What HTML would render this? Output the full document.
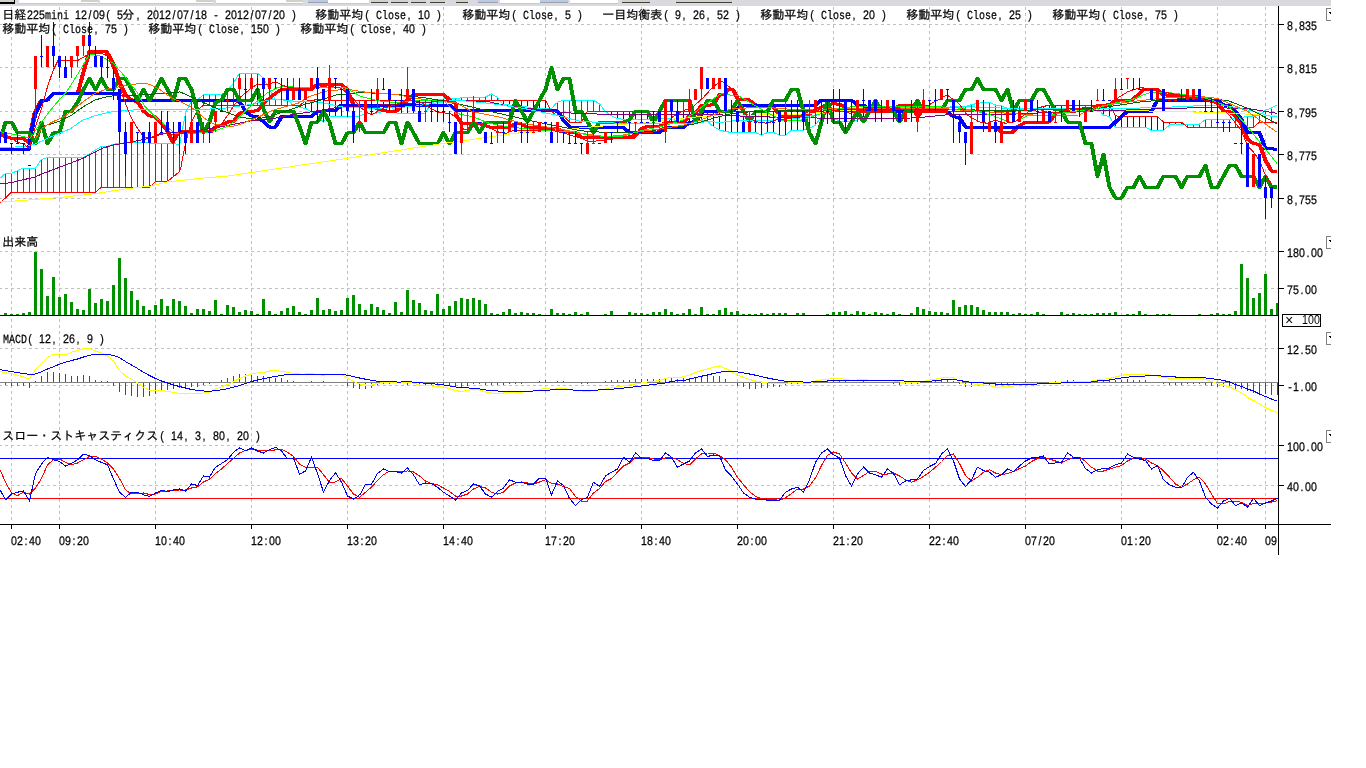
<!DOCTYPE html>
<html lang="ja"><head><meta charset="utf-8"><title>chart</title>
<style>html,body{margin:0;padding:0;background:#fff;overflow:hidden;width:1366px;height:768px}svg{display:block}</style></head>
<body><svg width="1366" height="768" viewBox="0 0 1366 768" shape-rendering="crispEdges">
<rect width="1366" height="768" fill="#fff"/>
<g id="strip">
<rect x="0" y="0" width="1331" height="6" fill="#d9dae0"/>
<rect x="0" y="0" width="14" height="2" fill="#d4d0c8"/>
<rect x="0" y="2" width="15" height="1.5" fill="#000"/>
<rect x="13.5" y="0" width="1.5" height="3" fill="#000"/>
<rect x="19" y="0" width="79" height="3" fill="#fff"/>
<rect x="19" y="2.5" width="79" height="1" fill="#c8c8d0"/>
<rect x="81" y="0" width="17" height="1.5" fill="#d4d0c8"/>
<rect x="81" y="1.5" width="17" height="0.8" fill="#808088"/>
<rect x="100" y="0" width="113" height="3" fill="#fff"/>
<rect x="100" y="2.5" width="113" height="1" fill="#c8c8d0"/>
<rect x="196" y="0" width="17" height="1.5" fill="#d4d0c8"/>
<rect x="196" y="1.5" width="17" height="0.8" fill="#808088"/>
<rect x="216" y="0" width="87" height="3" fill="#fff"/>
<rect x="216" y="2.5" width="87" height="1" fill="#c8c8d0"/>
<rect x="286" y="0" width="17" height="1.5" fill="#d4d0c8"/>
<rect x="286" y="1.5" width="17" height="0.8" fill="#808088"/>
<rect x="328" y="0" width="41" height="3" fill="#fff"/>
<rect x="328" y="2.5" width="41" height="1" fill="#c8c8d0"/>
<rect x="500" y="0" width="40" height="3" fill="#fff"/>
<rect x="500" y="2.5" width="40" height="1" fill="#c8c8d0"/>
<rect x="570" y="0" width="48" height="3" fill="#fff"/>
<rect x="570" y="2.5" width="48" height="1" fill="#c8c8d0"/>
<rect x="308" y="0" width="20" height="2" fill="#b8cce8"/>
<rect x="308" y="2" width="20" height="1" fill="#a0a0a8"/>
<rect x="478" y="0" width="20" height="2" fill="#b8cce8"/>
<rect x="478" y="2" width="20" height="1" fill="#a0a0a8"/>
<rect x="540" y="0" width="28" height="2" fill="#b8cce8"/>
<rect x="540" y="2" width="28" height="1" fill="#a0a0a8"/>
<rect x="371" y="0" width="17" height="1.5" fill="#d4d0c8"/>
<rect x="371" y="1.5" width="17" height="1" fill="#404040"/>
<rect x="391" y="0" width="17" height="1.5" fill="#d4d0c8"/>
<rect x="391" y="1.5" width="17" height="1" fill="#404040"/>
<rect x="411" y="0" width="15" height="1.5" fill="#d4d0c8"/>
<rect x="411" y="1.5" width="15" height="1" fill="#404040"/>
<rect x="430" y="0" width="15" height="1.5" fill="#d4d0c8"/>
<rect x="430" y="1.5" width="15" height="1" fill="#404040"/>
<rect x="456" y="0" width="12" height="1.5" fill="#d4d0c8"/>
<rect x="456" y="1.5" width="12" height="1" fill="#404040"/>
<rect x="622" y="0" width="28" height="1.5" fill="#d4d0c8"/>
<rect x="622" y="1.5" width="28" height="1" fill="#404040"/>
<rect x="676" y="0" width="56" height="1.5" fill="#d4d0c8"/>
<rect x="676" y="1.5" width="56" height="1" fill="#404040"/>
</g>
<g id="grid" stroke="#c0c0c0" stroke-width="1" stroke-dasharray="3,3">
<line x1="11.5" y1="7" x2="11.5" y2="523"/>
<line x1="59.5" y1="7" x2="59.5" y2="523"/>
<line x1="155.5" y1="7" x2="155.5" y2="523"/>
<line x1="251.5" y1="7" x2="251.5" y2="523"/>
<line x1="347.5" y1="7" x2="347.5" y2="523"/>
<line x1="443.5" y1="7" x2="443.5" y2="523"/>
<line x1="545.5" y1="7" x2="545.5" y2="523"/>
<line x1="641.5" y1="7" x2="641.5" y2="523"/>
<line x1="737.5" y1="7" x2="737.5" y2="523"/>
<line x1="833.5" y1="7" x2="833.5" y2="523"/>
<line x1="929.5" y1="7" x2="929.5" y2="523"/>
<line x1="1025.5" y1="7" x2="1025.5" y2="523"/>
<line x1="1121.5" y1="7" x2="1121.5" y2="523"/>
<line x1="1217.5" y1="7" x2="1217.5" y2="523"/>
<line x1="1265.5" y1="7" x2="1265.5" y2="523"/>
<line x1="-1" y1="24.5" x2="1278" y2="24.5"/>
<line x1="-1" y1="67.5" x2="1278" y2="67.5"/>
<line x1="-1" y1="111.5" x2="1278" y2="111.5"/>
<line x1="-1" y1="154.5" x2="1278" y2="154.5"/>
<line x1="-1" y1="198.5" x2="1278" y2="198.5"/>
<line x1="-1" y1="251.5" x2="1278" y2="251.5"/>
<line x1="-1" y1="288.5" x2="1278" y2="288.5"/>
<line x1="-1" y1="348.5" x2="1278" y2="348.5"/>
<line x1="-1" y1="385.5" x2="1278" y2="385.5"/>
<line x1="-1" y1="445.5" x2="1278" y2="445.5"/>
<line x1="-1" y1="485.5" x2="1278" y2="485.5"/>
</g>
<g id="main" clip-path="url(#cpm)">
<defs><clipPath id="cpm"><rect x="0" y="6" width="1277" height="226"/></clipPath><clipPath id="cps"><rect x="0" y="426" width="1278" height="98"/></clipPath><clipPath id="cpa"><rect x="0" y="0" width="1331" height="768"/></clipPath></defs>
<rect x="5" y="173" width="1" height="25" fill="#ff0000"/>
<rect x="11" y="173" width="1" height="19" fill="#ff0000"/>
<rect x="17" y="171" width="1" height="21" fill="#ff0000"/>
<rect x="23" y="168" width="1" height="24" fill="#ff0000"/>
<rect x="29" y="168" width="1" height="24" fill="#ff0000"/>
<rect x="35" y="168" width="1" height="24" fill="#ff0000"/>
<rect x="41" y="160" width="1" height="32" fill="#ff0000"/>
<rect x="47" y="158" width="1" height="34" fill="#ff0000"/>
<rect x="53" y="158" width="1" height="34" fill="#ff0000"/>
<rect x="59" y="158" width="1" height="34" fill="#ff0000"/>
<rect x="65" y="158" width="1" height="34" fill="#ff0000"/>
<rect x="71" y="158" width="1" height="34" fill="#ff0000"/>
<rect x="77" y="158" width="1" height="34" fill="#ff0000"/>
<rect x="83" y="158" width="1" height="34" fill="#ff0000"/>
<rect x="89" y="154" width="1" height="38" fill="#ff0000"/>
<rect x="95" y="150" width="1" height="42" fill="#ff0000"/>
<rect x="101" y="146" width="1" height="41" fill="#ff0000"/>
<rect x="107" y="146" width="1" height="41" fill="#ff0000"/>
<rect x="113" y="144" width="1" height="43" fill="#ff0000"/>
<rect x="119" y="143" width="1" height="44" fill="#ff0000"/>
<rect x="125" y="143" width="1" height="44" fill="#ff0000"/>
<rect x="131" y="143" width="1" height="44" fill="#ff0000"/>
<rect x="137" y="143" width="1" height="44" fill="#ff0000"/>
<rect x="143" y="143" width="1" height="44" fill="#ff0000"/>
<rect x="149" y="143" width="1" height="44" fill="#ff0000"/>
<rect x="155" y="143" width="1" height="39" fill="#ff0000"/>
<rect x="161" y="143" width="1" height="39" fill="#ff0000"/>
<rect x="167" y="143" width="1" height="38" fill="#ff0000"/>
<rect x="173" y="143" width="1" height="33" fill="#ff0000"/>
<rect x="179" y="145" width="1" height="27" fill="#ff0000"/>
<rect x="185" y="113" width="1" height="30" fill="#ff0000"/>
<rect x="191" y="101" width="1" height="21" fill="#ff0000"/>
<rect x="197" y="100" width="1" height="10" fill="#ff0000"/>
<rect x="203" y="94" width="1" height="11" fill="#ff0000"/>
<rect x="209" y="94" width="1" height="11" fill="#ff0000"/>
<rect x="215" y="94" width="1" height="11" fill="#ff0000"/>
<rect x="221" y="94" width="1" height="11" fill="#ff0000"/>
<rect x="227" y="91" width="1" height="14" fill="#ff0000"/>
<rect x="233" y="83" width="1" height="22" fill="#ff0000"/>
<rect x="239" y="73" width="1" height="32" fill="#ff0000"/>
<rect x="245" y="73" width="1" height="32" fill="#ff0000"/>
<rect x="251" y="73" width="1" height="32" fill="#ff0000"/>
<rect x="257" y="73" width="1" height="32" fill="#ff0000"/>
<rect x="263" y="78" width="1" height="27" fill="#ff0000"/>
<rect x="269" y="90" width="1" height="15" fill="#ff0000"/>
<rect x="275" y="100" width="1" height="5" fill="#ff0000"/>
<rect x="281" y="100" width="1" height="5" fill="#ff0000"/>
<rect x="287" y="100" width="1" height="5" fill="#ff0000"/>
<rect x="299" y="105" width="1" height="2" fill="#0000ff"/>
<rect x="305" y="101" width="1" height="7" fill="#0000ff"/>
<rect x="311" y="100" width="1" height="12" fill="#0000ff"/>
<rect x="317" y="100" width="1" height="16" fill="#0000ff"/>
<rect x="323" y="100" width="1" height="22" fill="#0000ff"/>
<rect x="329" y="100" width="1" height="17" fill="#0000ff"/>
<rect x="335" y="100" width="1" height="17" fill="#0000ff"/>
<rect x="341" y="100" width="1" height="17" fill="#0000ff"/>
<rect x="347" y="100" width="1" height="17" fill="#0000ff"/>
<rect x="353" y="100" width="1" height="17" fill="#0000ff"/>
<rect x="359" y="100" width="1" height="16" fill="#0000ff"/>
<rect x="365" y="100" width="1" height="14" fill="#0000ff"/>
<rect x="371" y="100" width="1" height="13" fill="#0000ff"/>
<rect x="377" y="100" width="1" height="13" fill="#0000ff"/>
<rect x="383" y="100" width="1" height="11" fill="#0000ff"/>
<rect x="389" y="100" width="1" height="6" fill="#0000ff"/>
<rect x="395" y="100" width="1" height="11" fill="#0000ff"/>
<rect x="401" y="100" width="1" height="13" fill="#0000ff"/>
<rect x="407" y="100" width="1" height="13" fill="#0000ff"/>
<rect x="413" y="100" width="1" height="13" fill="#0000ff"/>
<rect x="419" y="100" width="1" height="13" fill="#0000ff"/>
<rect x="425" y="100" width="1" height="13" fill="#0000ff"/>
<rect x="431" y="100" width="1" height="4" fill="#0000ff"/>
<rect x="443" y="99" width="1" height="1" fill="#ff0000"/>
<rect x="449" y="99" width="1" height="1" fill="#ff0000"/>
<rect x="455" y="98" width="1" height="2" fill="#ff0000"/>
<rect x="461" y="98" width="1" height="2" fill="#ff0000"/>
<rect x="467" y="97" width="1" height="3" fill="#ff0000"/>
<rect x="473" y="97" width="1" height="3" fill="#ff0000"/>
<rect x="479" y="97" width="1" height="3" fill="#ff0000"/>
<rect x="485" y="97" width="1" height="3" fill="#ff0000"/>
<rect x="491" y="94" width="1" height="6" fill="#ff0000"/>
<rect x="497" y="97" width="1" height="3" fill="#ff0000"/>
<rect x="503" y="100" width="1" height="4" fill="#0000ff"/>
<rect x="509" y="100" width="1" height="5" fill="#0000ff"/>
<rect x="515" y="100" width="1" height="6" fill="#0000ff"/>
<rect x="521" y="100" width="1" height="6" fill="#0000ff"/>
<rect x="527" y="100" width="1" height="7" fill="#0000ff"/>
<rect x="533" y="100" width="1" height="9" fill="#0000ff"/>
<rect x="539" y="100" width="1" height="9" fill="#0000ff"/>
<rect x="545" y="100" width="1" height="9" fill="#0000ff"/>
<rect x="551" y="109" width="1" height="3" fill="#ff0000"/>
<rect x="557" y="103" width="1" height="13" fill="#ff0000"/>
<rect x="563" y="100" width="1" height="16" fill="#ff0000"/>
<rect x="569" y="100" width="1" height="22" fill="#ff0000"/>
<rect x="575" y="100" width="1" height="22" fill="#ff0000"/>
<rect x="581" y="100" width="1" height="22" fill="#ff0000"/>
<rect x="587" y="100" width="1" height="11" fill="#ff0000"/>
<rect x="593" y="100" width="1" height="11" fill="#ff0000"/>
<rect x="599" y="104" width="1" height="7" fill="#ff0000"/>
<rect x="611" y="111" width="1" height="5" fill="#0000ff"/>
<rect x="617" y="111" width="1" height="8" fill="#0000ff"/>
<rect x="623" y="111" width="1" height="8" fill="#0000ff"/>
<rect x="629" y="111" width="1" height="8" fill="#0000ff"/>
<rect x="635" y="111" width="1" height="8" fill="#0000ff"/>
<rect x="641" y="111" width="1" height="8" fill="#0000ff"/>
<rect x="647" y="111" width="1" height="8" fill="#0000ff"/>
<rect x="653" y="111" width="1" height="8" fill="#0000ff"/>
<rect x="659" y="111" width="1" height="8" fill="#0000ff"/>
<rect x="665" y="111" width="1" height="7" fill="#0000ff"/>
<rect x="671" y="111" width="1" height="8" fill="#0000ff"/>
<rect x="677" y="111" width="1" height="10" fill="#0000ff"/>
<rect x="683" y="111" width="1" height="13" fill="#0000ff"/>
<rect x="689" y="111" width="1" height="12" fill="#0000ff"/>
<rect x="695" y="111" width="1" height="10" fill="#0000ff"/>
<rect x="701" y="111" width="1" height="9" fill="#0000ff"/>
<rect x="707" y="111" width="1" height="10" fill="#0000ff"/>
<rect x="713" y="111" width="1" height="16" fill="#0000ff"/>
<rect x="719" y="111" width="1" height="19" fill="#0000ff"/>
<rect x="725" y="111" width="1" height="21" fill="#0000ff"/>
<rect x="731" y="111" width="1" height="21" fill="#0000ff"/>
<rect x="737" y="111" width="1" height="21" fill="#0000ff"/>
<rect x="743" y="111" width="1" height="21" fill="#0000ff"/>
<rect x="749" y="111" width="1" height="21" fill="#0000ff"/>
<rect x="755" y="111" width="1" height="21" fill="#0000ff"/>
<rect x="761" y="111" width="1" height="24" fill="#0000ff"/>
<rect x="767" y="111" width="1" height="21" fill="#0000ff"/>
<rect x="773" y="111" width="1" height="21" fill="#0000ff"/>
<rect x="779" y="111" width="1" height="24" fill="#0000ff"/>
<rect x="785" y="111" width="1" height="24" fill="#0000ff"/>
<rect x="791" y="111" width="1" height="19" fill="#0000ff"/>
<rect x="797" y="111" width="1" height="19" fill="#0000ff"/>
<rect x="803" y="111" width="1" height="19" fill="#0000ff"/>
<rect x="809" y="111" width="1" height="17" fill="#0000ff"/>
<rect x="815" y="111" width="1" height="14" fill="#0000ff"/>
<rect x="821" y="111" width="1" height="6" fill="#0000ff"/>
<rect x="827" y="111" width="1" height="1" fill="#0000ff"/>
<rect x="833" y="111" width="1" height="7" fill="#0000ff"/>
<rect x="839" y="111" width="1" height="10" fill="#0000ff"/>
<rect x="845" y="111" width="1" height="11" fill="#0000ff"/>
<rect x="851" y="111" width="1" height="11" fill="#0000ff"/>
<rect x="857" y="111" width="1" height="9" fill="#0000ff"/>
<rect x="863" y="111" width="1" height="7" fill="#0000ff"/>
<rect x="869" y="111" width="1" height="3" fill="#0000ff"/>
<rect x="875" y="110" width="1" height="1" fill="#ff0000"/>
<rect x="881" y="109" width="1" height="2" fill="#ff0000"/>
<rect x="887" y="108" width="1" height="3" fill="#ff0000"/>
<rect x="893" y="108" width="1" height="3" fill="#ff0000"/>
<rect x="899" y="108" width="1" height="3" fill="#ff0000"/>
<rect x="905" y="108" width="1" height="3" fill="#ff0000"/>
<rect x="911" y="108" width="1" height="3" fill="#ff0000"/>
<rect x="917" y="108" width="1" height="3" fill="#ff0000"/>
<rect x="923" y="108" width="1" height="3" fill="#ff0000"/>
<rect x="929" y="108" width="1" height="3" fill="#ff0000"/>
<rect x="935" y="108" width="1" height="3" fill="#ff0000"/>
<rect x="941" y="108" width="1" height="3" fill="#ff0000"/>
<rect x="947" y="108" width="1" height="3" fill="#ff0000"/>
<rect x="953" y="108" width="1" height="3" fill="#ff0000"/>
<rect x="959" y="108" width="1" height="3" fill="#ff0000"/>
<rect x="965" y="106" width="1" height="5" fill="#ff0000"/>
<rect x="971" y="105" width="1" height="6" fill="#ff0000"/>
<rect x="977" y="103" width="1" height="8" fill="#ff0000"/>
<rect x="983" y="102" width="1" height="9" fill="#ff0000"/>
<rect x="989" y="102" width="1" height="9" fill="#ff0000"/>
<rect x="995" y="105" width="1" height="6" fill="#ff0000"/>
<rect x="1001" y="106" width="1" height="5" fill="#ff0000"/>
<rect x="1007" y="108" width="1" height="3" fill="#ff0000"/>
<rect x="1025" y="109" width="1" height="2" fill="#ff0000"/>
<rect x="1031" y="109" width="1" height="2" fill="#ff0000"/>
<rect x="1043" y="106" width="1" height="2" fill="#0000ff"/>
<rect x="1049" y="105" width="1" height="3" fill="#0000ff"/>
<rect x="1055" y="105" width="1" height="3" fill="#0000ff"/>
<rect x="1061" y="105" width="1" height="3" fill="#0000ff"/>
<rect x="1067" y="105" width="1" height="3" fill="#0000ff"/>
<rect x="1073" y="105" width="1" height="3" fill="#0000ff"/>
<rect x="1079" y="105" width="1" height="3" fill="#0000ff"/>
<rect x="1085" y="105" width="1" height="3" fill="#0000ff"/>
<rect x="1091" y="105" width="1" height="3" fill="#0000ff"/>
<rect x="1097" y="105" width="1" height="3" fill="#0000ff"/>
<rect x="1103" y="105" width="1" height="10" fill="#0000ff"/>
<rect x="1109" y="105" width="1" height="12" fill="#0000ff"/>
<rect x="1115" y="116" width="1" height="11" fill="#0000ff"/>
<rect x="1121" y="117" width="1" height="10" fill="#0000ff"/>
<rect x="1127" y="117" width="1" height="10" fill="#0000ff"/>
<rect x="1133" y="117" width="1" height="10" fill="#0000ff"/>
<rect x="1139" y="117" width="1" height="10" fill="#0000ff"/>
<rect x="1145" y="117" width="1" height="10" fill="#0000ff"/>
<rect x="1151" y="117" width="1" height="13" fill="#0000ff"/>
<rect x="1157" y="117" width="1" height="13" fill="#0000ff"/>
<rect x="1163" y="122" width="1" height="8" fill="#0000ff"/>
<rect x="1169" y="122" width="1" height="3" fill="#0000ff"/>
<rect x="1175" y="122" width="1" height="2" fill="#0000ff"/>
<rect x="1181" y="122" width="1" height="2" fill="#0000ff"/>
<rect x="1187" y="124" width="1" height="3" fill="#ff0000"/>
<rect x="1193" y="124" width="1" height="3" fill="#ff0000"/>
<rect x="1199" y="124" width="1" height="3" fill="#ff0000"/>
<rect x="1205" y="119" width="1" height="8" fill="#ff0000"/>
<rect x="1211" y="119" width="1" height="8" fill="#ff0000"/>
<rect x="1217" y="119" width="1" height="8" fill="#ff0000"/>
<rect x="1223" y="119" width="1" height="8" fill="#ff0000"/>
<rect x="1229" y="119" width="1" height="8" fill="#ff0000"/>
<rect x="1235" y="118" width="1" height="9" fill="#ff0000"/>
<rect x="1241" y="117" width="1" height="10" fill="#ff0000"/>
<rect x="1247" y="117" width="1" height="10" fill="#ff0000"/>
<rect x="1253" y="116" width="1" height="11" fill="#ff0000"/>
<rect x="1259" y="116" width="1" height="6" fill="#ff0000"/>
<rect x="1265" y="110" width="1" height="12" fill="#ff0000"/>
<rect x="1271" y="108" width="1" height="14" fill="#ff0000"/>
<rect x="1277" y="105" width="1" height="17" fill="#ff0000"/>
<polyline points="0.0,178.3 5.5,173.3 11.5,173.3 17.5,170.8 23.5,168.0 35.5,168.0 41.5,159.5 47.5,157.5 83.5,157.5 101.5,146.3 107.5,146.3 113.5,144.2 125.5,142.7 173.5,143.3 179.5,145.3 185.5,113.0 191.5,100.6 197.5,100.0 203.5,94.5 221.5,94.5 227.5,90.9 233.5,83.1 239.5,73.2 257.5,73.2 263.5,78.0 269.5,89.8 275.5,99.6 287.5,100.0 293.5,105.3 299.5,107.3 305.5,108.4 311.5,112.0 317.5,115.5 323.5,122.0 327.0,117.0 329.5,116.6 359.0,116.6 365.5,113.5 377.5,113.0 383.5,111.0 389.5,105.9 395.5,111.0 397.0,113.0 425.5,113.0 430.0,104.8 436.0,100.0 443.5,99.0 456.0,98.4 467.5,97.3 485.5,97.0 491.5,94.0 497.5,97.3 499.2,100.4 503.5,104.5 509.5,105.0 528.0,107.0 533.0,109.0 551.5,108.8 554.8,104.5 558.9,101.5 563.5,100.4 593.5,100.4 599.5,103.7 605.5,111.7 611.5,115.8 617.5,118.7 623.5,119.2 659.5,119.2 665.5,118.0 671.5,119.0 677.5,121.0 683.5,124.0 689.5,123.0 695.5,121.0 701.5,120.5 707.5,121.0 713.5,126.7 719.5,130.0 725.5,131.5 731.5,132.5 755.5,132.5 761.5,135.3 767.5,132.5 773.5,132.5 779.5,135.3 785.5,135.3 791.5,130.0 803.5,130.0 809.5,128.3 815.5,125.0 821.5,116.7 827.5,112.5 833.5,118.0 839.5,121.0 851.5,122.0 863.5,118.0 875.5,110.0 887.5,107.5 912.0,107.5 962.0,107.5 971.5,104.7 977.5,103.3 983.5,102.5 989.5,102.5 995.5,105.0 1001.5,105.8 1007.5,108.3 1013.5,111.2 1025.5,109.0 1049.5,108.3 1097.5,108.3 1103.5,115.0 1109.5,116.7 1115.5,127.3 1145.5,127.3 1151.5,130.5 1163.5,130.5 1169.5,125.0 1175.5,124.0 1199.5,124.0 1205.5,119.4 1229.5,119.4 1235.5,118.0 1247.5,116.6 1259.5,115.5 1265.5,110.2 1271.5,108.0 1277.5,104.8" fill="none" stroke="#00ffff" stroke-width="1" />
<polyline points="0.0,202.5 5.5,198.0 11.5,192.2 95.5,192.2 101.5,187.0 149.5,187.0 155.5,181.7 167.5,181.3 179.5,171.7 181.0,166.7 185.5,143.3 188.0,134.0 191.5,122.0 197.5,110.0 203.5,105.3 299.5,105.3 305.5,101.2 317.5,99.6 330.0,100.4 545.5,100.4 551.5,111.7 557.5,115.9 563.5,116.0 569.5,122.0 581.5,122.0 584.0,118.0 587.5,111.2 1030.0,111.2 1037.5,108.0 1049.5,105.0 1109.5,105.0 1115.5,115.8 1121.5,116.6 1151.5,116.6 1157.5,116.6 1163.5,122.0 1181.5,122.3 1187.5,127.3 1253.5,127.3 1259.5,122.0 1277.5,122.0" fill="none" stroke="#ff0000" stroke-width="1" />
<polyline points="-0.5,135.0 5.5,136.7 11.2,138.3 22.8,138.7 28.5,142.5 30.0,133.0 34.0,113.3 40.2,100.8" fill="none" stroke="#ff0000" stroke-width="3" stroke-linejoin="round"/>
<polyline points="0.5,135.0 6.5,136.7 12.2,138.3 23.8,138.7 29.5,142.5 31.0,133.0 35.0,113.3 41.2,100.8" fill="none" stroke="#ff0000" stroke-width="3" stroke-linejoin="round"/>
<polyline points="77.1,93.8 83.0,72.0 89.0,51.7 106.2,51.7 112.8,63.3 119.0,81.7 125.0,95.0 131.2,100.0 137.0,101.7 142.8,110.8 148.5,115.8 154.5,116.7 161.0,123.3 167.0,131.0 172.3,142.0 177.5,133.3 181.5,131.5 210.5,131.5 215.0,127.0 221.5,125.5 227.2,122.0 233.0,121.7 239.0,113.3 245.0,111.7 257.0,110.8 263.0,103.3 269.0,98.3 275.0,93.3 281.0,89.5 311.0,89.5 317.0,84.2 341.0,84.2 347.0,90.0 350.0,98.3 353.0,105.0 377.5,108.3 383.0,110.8 395.0,111.7 401.0,106.7 407.0,100.0 413.0,94.2 443.0,94.2 449.0,100.0 455.2,103.3 455.5,115.0 461.0,123.3 467.0,124.0 479.0,123.3 485.0,125.8 491.0,127.5 509.0,127.5 515.0,123.3 521.0,124.0 527.0,127.5 555.5,128.3 563.0,131.7 575.0,132.5 581.0,137.5 632.5,137.8 637.5,133.0 641.0,128.5 647.0,126.4 659.0,126.0 665.0,122.5 683.0,122.5 689.0,116.0 695.0,113.0 701.0,105.9 707.0,105.3 713.0,104.8 719.0,94.5 725.0,94.0 727.3,89.6 732.5,89.6 737.5,99.8 748.2,99.8 753.0,103.4 755.5,105.3 770.5,105.3 773.5,107.5 778.2,113.5 780.5,116.0 803.0,116.7 809.0,114.2 815.0,110.8 821.0,107.0 827.0,104.5 833.0,103.8 839.0,104.2 845.0,107.5 851.0,110.8 869.0,111.3 888.5,111.3 893.5,108.3 899.0,105.6 910.5,105.6 917.0,111.3 941.0,111.3 947.0,112.0 953.0,116.7 959.0,117.5 965.0,127.0 994.5,127.3 997.1,128.5 1001.2,132.6 1011.5,132.6 1017.5,126.5 1025.0,122.3 1049.0,122.0 1055.0,113.3 1061.0,111.2 1091.0,110.8 1097.0,105.8 1109.0,104.8 1115.0,100.3 1131.2,100.3 1143.5,89.5 1157.0,89.3 1162.5,94.7 1169.0,95.2 1199.0,96.7 1205.0,99.5 1217.0,102.7 1223.0,111.2 1229.0,111.2 1235.0,116.6 1241.0,124.0 1247.0,139.0 1253.0,143.7 1259.0,144.3 1265.0,160.3 1271.0,171.0 1277.0,171.4" fill="none" stroke="#ff0000" stroke-width="3" stroke-linejoin="round"/>
<polyline points="78.1,93.8 84.0,72.0 90.0,51.7 107.2,51.7 113.8,63.3 120.0,81.7 126.0,95.0 132.2,100.0 138.0,101.7 143.8,110.8 149.5,115.8 155.5,116.7 162.0,123.3 168.0,131.0 173.3,142.0 178.5,133.3 182.5,131.5 211.5,131.5 216.0,127.0 222.5,125.5 228.2,122.0 234.0,121.7 240.0,113.3 246.0,111.7 258.0,110.8 264.0,103.3 270.0,98.3 276.0,93.3 282.0,89.5 312.0,89.5 318.0,84.2 342.0,84.2 348.0,90.0 351.0,98.3 354.0,105.0 378.5,108.3 384.0,110.8 396.0,111.7 402.0,106.7 408.0,100.0 414.0,94.2 444.0,94.2 450.0,100.0 456.2,103.3 456.5,115.0 462.0,123.3 468.0,124.0 480.0,123.3 486.0,125.8 492.0,127.5 510.0,127.5 516.0,123.3 522.0,124.0 528.0,127.5 556.5,128.3 564.0,131.7 576.0,132.5 582.0,137.5 633.5,137.8 638.5,133.0 642.0,128.5 648.0,126.4 660.0,126.0 666.0,122.5 684.0,122.5 690.0,116.0 696.0,113.0 702.0,105.9 708.0,105.3 714.0,104.8 720.0,94.5 726.0,94.0 728.3,89.6 733.5,89.6 738.5,99.8 749.2,99.8 754.0,103.4 756.5,105.3 771.5,105.3 774.5,107.5 779.2,113.5 781.5,116.0 804.0,116.7 810.0,114.2 816.0,110.8 822.0,107.0 828.0,104.5 834.0,103.8 840.0,104.2 846.0,107.5 852.0,110.8 870.0,111.3 889.5,111.3 894.5,108.3 900.0,105.6 911.5,105.6 918.0,111.3 942.0,111.3 948.0,112.0 954.0,116.7 960.0,117.5 966.0,127.0 995.5,127.3 998.1,128.5 1002.2,132.6 1012.5,132.6 1018.5,126.5 1026.0,122.3 1050.0,122.0 1056.0,113.3 1062.0,111.2 1092.0,110.8 1098.0,105.8 1110.0,104.8 1116.0,100.3 1132.2,100.3 1144.5,89.5 1158.0,89.3 1163.5,94.7 1170.0,95.2 1200.0,96.7 1206.0,99.5 1218.0,102.7 1224.0,111.2 1230.0,111.2 1236.0,116.6 1242.0,124.0 1248.0,139.0 1254.0,143.7 1260.0,144.3 1266.0,160.3 1272.0,171.0 1278.0,171.4" fill="none" stroke="#ff0000" stroke-width="3" stroke-linejoin="round"/>
<polyline points="-0.5,149.2 28.5,149.2 30.5,133.0 35.0,113.3 41.2,100.8 47.0,100.0 52.8,93.8 118.7,93.8 119.0,100.3 237.5,100.3 241.5,105.0 245.0,111.7 251.0,115.8 257.0,116.7 263.0,121.7 269.0,127.0 275.0,127.0 281.0,116.7 287.0,116.2 311.0,116.2 317.0,111.7 323.0,110.8 335.0,110.8 341.0,105.0 449.2,105.0 455.2,110.8 555.5,110.8 559.0,113.0 563.0,120.8 569.0,126.7 570.5,127.5 623.0,127.5 629.0,132.6 659.0,132.6 665.0,127.5 683.0,127.5 689.0,122.3 695.0,121.8 701.0,114.0 703.5,111.2 731.0,111.2 737.0,108.0 743.0,105.0 815.0,105.0 821.0,100.0 850.5,100.0 857.0,105.0 863.5,105.0 869.0,111.2 941.0,111.2 947.0,112.0 953.0,116.7 959.0,117.5 965.0,127.0 1109.0,127.3 1115.0,122.0 1121.0,116.6 1127.0,111.2 1151.0,111.2 1157.0,100.3 1217.0,100.3 1223.0,104.8 1229.0,106.0 1235.0,111.2 1241.0,119.8 1247.0,132.8 1259.0,132.8 1265.0,148.6 1277.0,149.2" fill="none" stroke="#0000ff" stroke-width="3" stroke-linejoin="round"/>
<polyline points="0.5,149.2 29.5,149.2 31.5,133.0 36.0,113.3 42.2,100.8 48.0,100.0 53.8,93.8 119.7,93.8 120.0,100.3 238.5,100.3 242.5,105.0 246.0,111.7 252.0,115.8 258.0,116.7 264.0,121.7 270.0,127.0 276.0,127.0 282.0,116.7 288.0,116.2 312.0,116.2 318.0,111.7 324.0,110.8 336.0,110.8 342.0,105.0 450.2,105.0 456.2,110.8 556.5,110.8 560.0,113.0 564.0,120.8 570.0,126.7 571.5,127.5 624.0,127.5 630.0,132.6 660.0,132.6 666.0,127.5 684.0,127.5 690.0,122.3 696.0,121.8 702.0,114.0 704.5,111.2 732.0,111.2 738.0,108.0 744.0,105.0 816.0,105.0 822.0,100.0 851.5,100.0 858.0,105.0 864.5,105.0 870.0,111.2 942.0,111.2 948.0,112.0 954.0,116.7 960.0,117.5 966.0,127.0 1110.0,127.3 1116.0,122.0 1122.0,116.6 1128.0,111.2 1152.0,111.2 1158.0,100.3 1218.0,100.3 1224.0,104.8 1230.0,106.0 1236.0,111.2 1242.0,119.8 1248.0,132.8 1260.0,132.8 1266.0,148.6 1278.0,149.2" fill="none" stroke="#0000ff" stroke-width="3" stroke-linejoin="round"/>
<polyline points="-0.5,132.9 2.0,132.9 5.0,122.0 11.0,122.0 17.0,132.9 23.0,132.9 29.0,132.9 35.0,143.8 41.0,122.0 47.0,143.8 53.0,132.9 59.0,132.9 65.0,111.2 71.0,111.2 77.0,102.5 83.0,89.5 89.0,78.7 95.0,89.5 101.0,78.7 107.0,89.5 113.0,89.5 119.0,78.7 125.0,78.7 131.0,89.5 137.0,100.3 143.0,89.5 149.0,100.3 155.0,89.5 161.0,78.7 167.0,89.5 173.0,100.3 179.0,78.7 185.0,78.7 191.0,89.5 197.0,111.2 203.0,132.9 209.0,122.0 215.0,102.5 221.0,100.3 227.0,89.5 233.0,89.5 239.0,100.3 245.0,100.3 251.0,100.3 257.0,89.5 263.0,109.0 269.0,122.0 275.0,111.2 281.0,111.2 287.0,111.2 293.0,111.2 299.0,126.4 305.0,143.8 311.0,122.0 317.0,122.0 323.0,111.2 329.0,122.0 335.0,143.8 341.0,143.8 347.0,132.9 353.0,132.9 359.0,122.0 365.0,132.9 371.0,132.9 377.0,132.9 383.0,132.9 389.0,122.0 395.0,122.0 401.0,143.8 407.0,122.0 413.0,132.9 419.0,143.8 425.0,143.8 431.0,143.8 437.0,143.8 443.0,132.9 449.0,143.8 455.0,132.9 461.0,132.9 467.0,132.9 473.0,122.0 479.0,132.9 485.0,122.0 491.0,122.0 497.0,122.0 503.0,122.0 509.0,122.0 515.0,100.3 521.0,111.2 527.0,122.0 533.0,111.2 539.0,100.3 545.0,89.5 551.0,67.8 557.0,89.5 563.0,78.7 569.0,78.7 575.0,111.2 581.0,111.2 587.0,122.0 593.0,132.9 599.0,122.0 605.0,122.0 611.0,122.0 617.0,122.0 623.0,122.0 629.0,119.9 635.0,111.2 641.0,111.2 647.0,111.2 653.0,122.0 659.0,111.2 665.0,100.3 671.0,100.3 677.0,100.3 683.0,100.3 689.0,100.3 695.0,122.0 701.0,111.2 707.0,100.3 713.0,100.3 719.0,111.2 725.0,111.2 731.0,111.2 737.0,100.3 743.0,111.2 749.0,122.0 755.0,111.2 761.0,111.2 767.0,111.2 773.0,100.3 779.0,100.3 785.0,100.3 791.0,89.5 797.0,89.5 803.0,111.2 809.0,132.9 815.0,143.8 821.0,122.0 827.0,100.3 833.0,122.0 839.0,122.0 845.0,132.9 851.0,122.0 857.0,111.2 863.0,122.0 869.0,111.2 875.0,100.3 881.0,111.2 887.0,111.2 893.0,111.2 899.0,122.0 905.0,111.2 911.0,111.2 917.0,100.3 923.0,111.2 929.0,111.2 935.0,111.2 941.0,111.2 947.0,100.3 953.0,100.3 959.0,100.3 965.0,89.5 971.0,89.5 977.0,78.7 983.0,89.5 989.0,89.5 995.0,89.5 1001.0,100.3 1007.0,89.5 1013.0,111.2 1019.0,100.3 1025.0,100.3 1031.0,100.3 1037.0,89.5 1043.0,89.5 1049.0,100.3 1055.0,111.2 1061.0,111.2 1067.0,122.0 1073.0,122.0 1079.0,122.0 1085.0,143.8 1091.0,143.8 1097.0,176.3 1103.0,154.6 1109.0,187.2 1115.0,198.0 1121.0,198.0 1127.0,187.2 1133.0,187.2 1139.0,176.3 1145.0,187.2 1151.0,187.2 1157.0,187.2 1163.0,176.3 1169.0,176.3 1175.0,176.3 1181.0,187.2 1187.0,176.3 1193.0,176.3 1199.0,176.3 1205.0,165.4 1211.0,187.2 1217.0,187.2 1223.0,176.3 1229.0,165.4 1235.0,165.4 1241.0,176.3 1247.0,176.3 1253.0,176.3 1259.0,187.2 1265.0,176.3 1271.0,187.2 1277.0,187.2" fill="none" stroke="#009000" stroke-width="3" stroke-linejoin="round"/>
<polyline points="0.5,132.9 3.0,132.9 6.0,122.0 12.0,122.0 18.0,132.9 24.0,132.9 30.0,132.9 36.0,143.8 42.0,122.0 48.0,143.8 54.0,132.9 60.0,132.9 66.0,111.2 72.0,111.2 78.0,102.5 84.0,89.5 90.0,78.7 96.0,89.5 102.0,78.7 108.0,89.5 114.0,89.5 120.0,78.7 126.0,78.7 132.0,89.5 138.0,100.3 144.0,89.5 150.0,100.3 156.0,89.5 162.0,78.7 168.0,89.5 174.0,100.3 180.0,78.7 186.0,78.7 192.0,89.5 198.0,111.2 204.0,132.9 210.0,122.0 216.0,102.5 222.0,100.3 228.0,89.5 234.0,89.5 240.0,100.3 246.0,100.3 252.0,100.3 258.0,89.5 264.0,109.0 270.0,122.0 276.0,111.2 282.0,111.2 288.0,111.2 294.0,111.2 300.0,126.4 306.0,143.8 312.0,122.0 318.0,122.0 324.0,111.2 330.0,122.0 336.0,143.8 342.0,143.8 348.0,132.9 354.0,132.9 360.0,122.0 366.0,132.9 372.0,132.9 378.0,132.9 384.0,132.9 390.0,122.0 396.0,122.0 402.0,143.8 408.0,122.0 414.0,132.9 420.0,143.8 426.0,143.8 432.0,143.8 438.0,143.8 444.0,132.9 450.0,143.8 456.0,132.9 462.0,132.9 468.0,132.9 474.0,122.0 480.0,132.9 486.0,122.0 492.0,122.0 498.0,122.0 504.0,122.0 510.0,122.0 516.0,100.3 522.0,111.2 528.0,122.0 534.0,111.2 540.0,100.3 546.0,89.5 552.0,67.8 558.0,89.5 564.0,78.7 570.0,78.7 576.0,111.2 582.0,111.2 588.0,122.0 594.0,132.9 600.0,122.0 606.0,122.0 612.0,122.0 618.0,122.0 624.0,122.0 630.0,119.9 636.0,111.2 642.0,111.2 648.0,111.2 654.0,122.0 660.0,111.2 666.0,100.3 672.0,100.3 678.0,100.3 684.0,100.3 690.0,100.3 696.0,122.0 702.0,111.2 708.0,100.3 714.0,100.3 720.0,111.2 726.0,111.2 732.0,111.2 738.0,100.3 744.0,111.2 750.0,122.0 756.0,111.2 762.0,111.2 768.0,111.2 774.0,100.3 780.0,100.3 786.0,100.3 792.0,89.5 798.0,89.5 804.0,111.2 810.0,132.9 816.0,143.8 822.0,122.0 828.0,100.3 834.0,122.0 840.0,122.0 846.0,132.9 852.0,122.0 858.0,111.2 864.0,122.0 870.0,111.2 876.0,100.3 882.0,111.2 888.0,111.2 894.0,111.2 900.0,122.0 906.0,111.2 912.0,111.2 918.0,100.3 924.0,111.2 930.0,111.2 936.0,111.2 942.0,111.2 948.0,100.3 954.0,100.3 960.0,100.3 966.0,89.5 972.0,89.5 978.0,78.7 984.0,89.5 990.0,89.5 996.0,89.5 1002.0,100.3 1008.0,89.5 1014.0,111.2 1020.0,100.3 1026.0,100.3 1032.0,100.3 1038.0,89.5 1044.0,89.5 1050.0,100.3 1056.0,111.2 1062.0,111.2 1068.0,122.0 1074.0,122.0 1080.0,122.0 1086.0,143.8 1092.0,143.8 1098.0,176.3 1104.0,154.6 1110.0,187.2 1116.0,198.0 1122.0,198.0 1128.0,187.2 1134.0,187.2 1140.0,176.3 1146.0,187.2 1152.0,187.2 1158.0,187.2 1164.0,176.3 1170.0,176.3 1176.0,176.3 1182.0,187.2 1188.0,176.3 1194.0,176.3 1200.0,176.3 1206.0,165.4 1212.0,187.2 1218.0,187.2 1224.0,176.3 1230.0,165.4 1236.0,165.4 1242.0,176.3 1248.0,176.3 1254.0,176.3 1260.0,187.2 1266.0,176.3 1272.0,187.2 1278.0,187.2" fill="none" stroke="#009000" stroke-width="3" stroke-linejoin="round"/>
<polyline points="815.0,105.0 821.0,100.0 850.5,100.0 857.0,105.0" fill="none" stroke="#0000ff" stroke-width="3" stroke-linejoin="round"/>
<polyline points="816.0,105.0 822.0,100.0 851.5,100.0 858.0,105.0" fill="none" stroke="#0000ff" stroke-width="3" stroke-linejoin="round"/>
<polyline points="106.2,51.7 112.8,63.3 119.0,81.7 125.0,95.0" fill="none" stroke="#ff0000" stroke-width="3" stroke-linejoin="round"/>
<polyline points="107.2,51.7 113.8,63.3 120.0,81.7 126.0,95.0" fill="none" stroke="#ff0000" stroke-width="3" stroke-linejoin="round"/>
<polyline points="869.0,111.3 888.5,111.3 893.5,108.3 899.0,105.6 910.5,105.6 917.0,111.3 941.0,111.3 947.0,112.0" fill="none" stroke="#ff0000" stroke-width="3" stroke-linejoin="round"/>
<polyline points="870.0,111.3 889.5,111.3 894.5,108.3 900.0,105.6 911.5,105.6 918.0,111.3 942.0,111.3 948.0,112.0" fill="none" stroke="#ff0000" stroke-width="3" stroke-linejoin="round"/>
<polyline points="0.0,202.0 11.5,201.3 59.5,197.5 95.0,193.7 130.0,188.3 150.0,186.2 167.0,182.0 200.0,178.3 228.0,176.0 347.5,158.3 443.5,143.3 456.0,142.0 480.0,138.3 515.0,133.3 545.0,130.8 575.0,128.3 610.0,125.4 648.0,122.3 662.0,120.3 682.0,118.2 713.0,115.5 730.0,115.0 760.0,115.0 800.0,114.5 834.0,111.0 860.0,109.8 950.0,109.8 1000.0,112.3 1100.0,110.4 1164.0,111.2 1228.0,113.0 1277.5,116.0" fill="none" stroke="#ffff00" stroke-width="1" />
<polyline points="0.0,184.0 11.7,182.5 35.0,177.0 41.7,174.0 83.0,158.3 101.7,148.5 113.0,145.0 125.0,143.0 137.0,140.8 150.0,138.3 161.7,134.2 173.0,132.5 185.0,131.3 195.0,131.0 226.0,125.8 252.0,120.7 272.6,118.6 293.0,114.5 313.7,111.4 340.0,107.0 400.0,104.0 456.0,100.5 489.0,101.7 506.0,105.8 528.0,108.3 563.0,112.5 581.0,113.7 623.0,114.5 700.0,114.5 709.0,114.2 740.0,116.0 784.0,117.5 850.0,118.5 912.0,118.0 923.0,117.2 949.0,114.6 995.0,115.0 1080.0,111.0 1100.0,110.6 1121.0,110.2 1164.0,108.7 1207.0,107.4 1249.0,108.7 1277.5,113.4" fill="none" stroke="#800080" stroke-width="1" />
<polyline points="0.0,148.0 8.0,147.5 28.0,146.0 35.0,144.0 45.0,139.5 55.0,135.0 70.0,129.0 83.0,120.0 95.0,115.8 108.0,112.5 119.5,110.8 133.0,110.0 150.0,109.7 183.0,109.5 221.0,108.8 252.0,104.2 272.6,99.0 293.0,101.0 320.0,102.2 345.0,107.5 378.0,108.3 411.0,106.7 456.0,100.0 489.0,103.3 523.0,108.3 556.0,115.0 581.0,121.5 623.0,123.4 690.0,123.4 709.0,121.5 720.0,122.5 735.0,120.5 775.0,120.0 800.0,118.0 820.0,114.0 840.0,110.0 850.0,107.0 912.0,106.0 950.0,106.0 1000.0,108.0 1100.0,109.0 1164.0,107.4 1207.0,105.3 1228.0,106.0 1249.0,110.2 1270.0,116.0 1277.5,117.0" fill="none" stroke="#00ffff" stroke-width="1" />
<polyline points="35.0,140.0 41.7,126.7 58.3,121.7 71.7,115.0 83.3,106.7 95.0,100.0 106.7,96.7 119.5,95.0 133.0,95.3 150.0,94.2 167.0,93.3 180.0,91.9 200.6,101.2 221.0,110.4 241.7,117.6 257.0,119.2 272.6,115.6 295.0,108.0 306.0,104.0 318.0,101.0 336.0,95.0 361.0,92.5 394.7,94.2 428.0,98.3 456.0,103.3 481.0,109.2 506.0,115.0 531.0,120.8 556.0,125.8 581.0,130.8 606.0,132.5 631.0,132.0 662.0,129.5 693.0,124.4 713.5,118.2 730.0,114.0 750.7,111.7 850.0,109.0 950.0,109.0 1000.0,111.0 1100.0,108.0 1142.7,101.6 1185.4,98.4 1202.5,98.0 1228.0,100.6 1249.4,109.0 1277.5,124.0" fill="none" stroke="#006400" stroke-width="1" />
<polyline points="35.0,140.0 41.7,128.3 50.0,123.3 66.7,115.0 83.3,101.7 95.0,93.3 106.7,89.2 119.5,86.7 133.3,84.2 146.7,83.3 153.0,86.0 160.0,89.5 167.0,95.0 175.0,99.5 181.0,102.0 190.0,106.5 197.0,111.5 203.0,117.0 208.0,121.0 214.0,124.0 222.0,125.3 231.4,126.9 241.7,123.8 257.0,117.6 272.6,110.4 283.0,107.3 298.3,103.2 308.6,97.0 320.0,92.9 328.0,90.8 348.0,89.2 361.3,91.7 378.0,93.3 394.7,94.2 411.3,97.5 428.0,100.0 456.0,103.0 472.7,111.7 497.7,116.7 522.7,123.3 556.0,128.3 581.0,133.3 606.0,136.7 622.7,135.0 639.3,131.7 664.3,128.3 684.0,125.0 700.7,120.0 717.3,113.3 734.0,108.3 767.3,107.5 800.7,110.0 850.0,108.2 940.0,108.2 960.0,110.0 1045.0,115.8 1078.7,115.0 1100.0,105.9 1132.0,101.6 1164.0,98.0 1198.2,96.3 1217.4,98.4 1247.3,111.2 1277.5,132.6" fill="none" stroke="#ff6600" stroke-width="1" />
<polyline points="0.0,131.7 16.7,135.0 30.0,138.3 41.7,121.7 53.3,106.7 66.7,91.7 78.3,73.3 89.5,54.2 100.0,55.8 113.3,63.3 125.0,76.7 136.7,91.7 145.0,106.7 155.0,116.7 166.7,126.7 175.0,133.3 191.7,133.3 210.9,132.0 226.3,126.9 236.6,119.7 246.9,109.4 257.2,101.2 267.4,92.9 277.7,87.3 288.0,86.2 298.3,87.6 320.0,87.8 344.7,87.5 361.3,96.7 378.0,100.8 394.7,102.5 411.3,100.8 428.0,100.0 444.7,101.7 456.0,113.3 472.7,116.7 489.3,123.3 506.0,126.7 539.3,130.0 572.7,131.7 590.0,135.7 620.9,136.7 641.4,130.6 662.0,126.4 682.6,120.3 692.9,114.0 703.2,105.9 713.5,98.7 721.7,93.5 730.0,95.0 738.0,95.6 750.0,102.5 762.0,109.6 774.0,116.0 780.0,120.0 800.0,120.5 817.3,115.0 834.0,109.5 850.0,107.0 940.0,106.8 962.0,108.3 970.9,110.0 991.4,115.1 1001.7,119.2 1012.0,122.8 1022.3,118.2 1027.4,115.6 1045.3,115.5 1078.7,110.8 1090.6,111.2 1104.0,106.0 1115.3,102.9 1131.7,99.8 1144.0,94.7 1152.3,92.1 1162.6,92.1 1172.9,93.1 1193.5,95.7 1205.5,98.0 1229.4,107.0 1247.3,126.2 1262.3,145.4 1277.5,164.0" fill="none" stroke="#00ff00" stroke-width="1" />
<polyline points="0.0,134.0 8.0,136.0 17.0,142.0 24.0,144.5 29.5,148.5 31.5,140.0 35.5,126.7 41.7,108.3 47.5,86.7 53.3,70.0 58.3,60.0 65.0,60.8 77.5,60.5 83.3,57.5 89.5,53.3 101.5,53.3 107.5,55.8 113.5,70.0 119.5,86.7 125.5,103.3 131.5,118.3 137.5,128.3 143.5,136.7 149.5,138.3 161.5,133.0 173.5,135.0 185.5,133.0 197.5,130.0 210.9,132.0 221.5,123.8 227.5,115.6 233.5,106.3 239.5,98.0 245.5,93.0 251.5,87.8 257.5,84.2 267.5,84.2 275.5,82.0 281.5,84.7 287.5,87.3 294.7,88.3 311.3,88.3 328.0,85.8 341.3,88.3 353.0,98.3 361.3,108.3 371.3,115.0 383.0,108.3 394.7,105.0 408.0,100.0 419.7,101.7 428.0,106.7 438.0,112.5 449.7,113.3 456.0,117.0 464.3,130.0 472.7,126.7 481.0,123.3 497.7,131.7 506.0,133.3 514.3,130.0 531.0,130.8 547.7,129.2 564.3,133.3 581.0,138.3 589.3,141.7 606.0,140.0 622.7,137.5 639.3,133.3 656.0,131.7 664.3,126.7 672.7,116.7 684.0,110.5 692.9,106.9 703.2,97.6 713.5,86.3 721.7,81.2 730.0,87.3 739.0,103.3 747.3,116.7 755.7,121.7 767.3,123.3 775.7,120.0 787.3,119.0 800.7,115.0 817.3,108.3 825.7,113.3 834.0,110.0 850.7,113.3 867.3,108.3 884.0,107.5 912.0,110.0 928.7,105.0 947.0,95.0 958.7,103.3 967.0,115.0 978.7,121.7 987.0,123.3 995.3,120.0 1005.3,123.3 1015.3,121.7 1028.7,111.7 1038.7,109.2 1050.3,113.3 1062.0,111.7 1078.7,108.3 1095.3,106.7 1109.5,103.3 1115.4,99.5 1127.3,92.0 1139.5,87.8 1151.5,88.4 1163.4,92.0 1217.4,102.7 1229.4,115.5 1241.3,130.5 1247.3,145.4 1253.3,151.8 1259.3,160.3 1265.5,175.3 1271.5,185.0 1277.5,186.0" fill="none" stroke="#ff0000" stroke-width="1" />
<rect x="-1" y="132" width="1" height="11" fill="#0000ff"/>
<rect x="-2" y="132" width="3" height="11" fill="#0000ff"/>
<rect x="5" y="132" width="1" height="11" fill="#0000ff"/>
<rect x="4" y="132" width="3" height="11" fill="#0000ff"/>
<rect x="11" y="143" width="1" height="11" fill="#0000ff"/>
<rect x="10" y="143" width="3" height="1" fill="#0000ff"/>
<rect x="17" y="132" width="1" height="11" fill="#0000ff"/>
<rect x="16" y="143" width="3" height="1" fill="#0000ff"/>
<rect x="23" y="143" width="1" height="11" fill="#0000ff"/>
<rect x="22" y="143" width="3" height="1" fill="#0000ff"/>
<rect x="29" y="165" width="1" height="1" fill="#0000ff"/>
<rect x="28" y="165" width="3" height="1" fill="#0000ff"/>
<rect x="35" y="56" width="1" height="66" fill="#ff0000"/>
<rect x="34" y="56" width="3" height="33" fill="#ff0000"/>
<rect x="41" y="35" width="1" height="32" fill="#0000ff"/>
<rect x="40" y="56" width="3" height="1" fill="#0000ff"/>
<rect x="47" y="46" width="1" height="21" fill="#ff0000"/>
<rect x="46" y="46" width="3" height="21" fill="#ff0000"/>
<rect x="53" y="22" width="1" height="45" fill="#0000ff"/>
<rect x="52" y="46" width="3" height="10" fill="#0000ff"/>
<rect x="59" y="56" width="1" height="22" fill="#0000ff"/>
<rect x="58" y="56" width="3" height="11" fill="#0000ff"/>
<rect x="65" y="56" width="1" height="22" fill="#0000ff"/>
<rect x="64" y="67" width="3" height="11" fill="#0000ff"/>
<rect x="71" y="56" width="1" height="22" fill="#ff0000"/>
<rect x="70" y="56" width="3" height="11" fill="#ff0000"/>
<rect x="77" y="46" width="1" height="21" fill="#ff0000"/>
<rect x="76" y="46" width="3" height="10" fill="#ff0000"/>
<rect x="83" y="35" width="1" height="21" fill="#ff0000"/>
<rect x="82" y="35" width="3" height="11" fill="#ff0000"/>
<rect x="89" y="22" width="1" height="34" fill="#0000ff"/>
<rect x="88" y="35" width="3" height="11" fill="#0000ff"/>
<rect x="95" y="46" width="1" height="21" fill="#0000ff"/>
<rect x="94" y="56" width="3" height="11" fill="#0000ff"/>
<rect x="101" y="56" width="1" height="22" fill="#0000ff"/>
<rect x="100" y="56" width="3" height="11" fill="#0000ff"/>
<rect x="107" y="56" width="1" height="22" fill="#0000ff"/>
<rect x="106" y="67" width="3" height="1" fill="#0000ff"/>
<rect x="113" y="67" width="1" height="33" fill="#0000ff"/>
<rect x="112" y="78" width="3" height="11" fill="#0000ff"/>
<rect x="119" y="89" width="1" height="54" fill="#0000ff"/>
<rect x="118" y="89" width="3" height="43" fill="#0000ff"/>
<rect x="125" y="122" width="1" height="54" fill="#0000ff"/>
<rect x="124" y="132" width="3" height="22" fill="#0000ff"/>
<rect x="131" y="122" width="1" height="21" fill="#ff0000"/>
<rect x="130" y="122" width="3" height="21" fill="#ff0000"/>
<rect x="137" y="132" width="1" height="11" fill="#0000ff"/>
<rect x="136" y="132" width="3" height="1" fill="#0000ff"/>
<rect x="143" y="132" width="1" height="22" fill="#0000ff"/>
<rect x="142" y="132" width="3" height="11" fill="#0000ff"/>
<rect x="149" y="122" width="1" height="21" fill="#0000ff"/>
<rect x="148" y="132" width="3" height="11" fill="#0000ff"/>
<rect x="155" y="122" width="1" height="21" fill="#ff0000"/>
<rect x="154" y="122" width="3" height="21" fill="#ff0000"/>
<rect x="161" y="111" width="1" height="21" fill="#0000ff"/>
<rect x="160" y="132" width="3" height="1" fill="#0000ff"/>
<rect x="167" y="111" width="1" height="21" fill="#0000ff"/>
<rect x="166" y="122" width="3" height="10" fill="#0000ff"/>
<rect x="173" y="122" width="1" height="21" fill="#0000ff"/>
<rect x="172" y="132" width="3" height="1" fill="#0000ff"/>
<rect x="179" y="122" width="1" height="32" fill="#0000ff"/>
<rect x="178" y="122" width="3" height="10" fill="#0000ff"/>
<rect x="185" y="132" width="1" height="22" fill="#0000ff"/>
<rect x="184" y="132" width="3" height="11" fill="#0000ff"/>
<rect x="191" y="100" width="1" height="43" fill="#ff0000"/>
<rect x="190" y="122" width="3" height="21" fill="#ff0000"/>
<rect x="197" y="122" width="1" height="21" fill="#0000ff"/>
<rect x="196" y="122" width="3" height="21" fill="#0000ff"/>
<rect x="203" y="122" width="1" height="21" fill="#ff0000"/>
<rect x="202" y="132" width="3" height="1" fill="#ff0000"/>
<rect x="209" y="122" width="1" height="21" fill="#0000ff"/>
<rect x="208" y="132" width="3" height="1" fill="#0000ff"/>
<rect x="215" y="111" width="1" height="21" fill="#ff0000"/>
<rect x="214" y="111" width="3" height="11" fill="#ff0000"/>
<rect x="221" y="100" width="1" height="11" fill="#0000ff"/>
<rect x="220" y="111" width="3" height="1" fill="#0000ff"/>
<rect x="227" y="89" width="1" height="22" fill="#ff0000"/>
<rect x="226" y="100" width="3" height="1" fill="#ff0000"/>
<rect x="233" y="78" width="1" height="22" fill="#ff0000"/>
<rect x="232" y="89" width="3" height="1" fill="#ff0000"/>
<rect x="239" y="78" width="1" height="11" fill="#ff0000"/>
<rect x="238" y="78" width="3" height="11" fill="#ff0000"/>
<rect x="245" y="78" width="1" height="22" fill="#0000ff"/>
<rect x="244" y="89" width="3" height="1" fill="#0000ff"/>
<rect x="251" y="78" width="1" height="22" fill="#ff0000"/>
<rect x="250" y="78" width="3" height="11" fill="#ff0000"/>
<rect x="257" y="78" width="1" height="22" fill="#0000ff"/>
<rect x="256" y="89" width="3" height="1" fill="#0000ff"/>
<rect x="263" y="78" width="1" height="22" fill="#0000ff"/>
<rect x="262" y="78" width="3" height="11" fill="#0000ff"/>
<rect x="269" y="78" width="1" height="22" fill="#ff0000"/>
<rect x="268" y="78" width="3" height="11" fill="#ff0000"/>
<rect x="275" y="78" width="1" height="11" fill="#0000ff"/>
<rect x="274" y="78" width="3" height="1" fill="#0000ff"/>
<rect x="281" y="78" width="1" height="22" fill="#0000ff"/>
<rect x="280" y="89" width="3" height="1" fill="#0000ff"/>
<rect x="287" y="78" width="1" height="22" fill="#0000ff"/>
<rect x="286" y="89" width="3" height="11" fill="#0000ff"/>
<rect x="293" y="78" width="1" height="22" fill="#ff0000"/>
<rect x="292" y="89" width="3" height="11" fill="#ff0000"/>
<rect x="299" y="78" width="1" height="22" fill="#0000ff"/>
<rect x="298" y="89" width="3" height="11" fill="#0000ff"/>
<rect x="305" y="89" width="1" height="11" fill="#ff0000"/>
<rect x="304" y="89" width="3" height="11" fill="#ff0000"/>
<rect x="311" y="78" width="1" height="11" fill="#ff0000"/>
<rect x="310" y="78" width="3" height="11" fill="#ff0000"/>
<rect x="317" y="67" width="1" height="55" fill="#0000ff"/>
<rect x="316" y="78" width="3" height="11" fill="#0000ff"/>
<rect x="323" y="89" width="1" height="33" fill="#0000ff"/>
<rect x="322" y="89" width="3" height="11" fill="#0000ff"/>
<rect x="329" y="65" width="1" height="35" fill="#ff0000"/>
<rect x="328" y="78" width="3" height="22" fill="#ff0000"/>
<rect x="335" y="78" width="1" height="11" fill="#0000ff"/>
<rect x="334" y="78" width="3" height="1" fill="#0000ff"/>
<rect x="341" y="89" width="1" height="11" fill="#0000ff"/>
<rect x="340" y="89" width="3" height="1" fill="#0000ff"/>
<rect x="347" y="89" width="1" height="28" fill="#0000ff"/>
<rect x="346" y="89" width="3" height="22" fill="#0000ff"/>
<rect x="353" y="100" width="1" height="43" fill="#0000ff"/>
<rect x="352" y="111" width="3" height="21" fill="#0000ff"/>
<rect x="359" y="100" width="1" height="32" fill="#ff0000"/>
<rect x="358" y="122" width="3" height="1" fill="#ff0000"/>
<rect x="365" y="100" width="1" height="22" fill="#ff0000"/>
<rect x="364" y="100" width="3" height="22" fill="#ff0000"/>
<rect x="371" y="89" width="1" height="26" fill="#0000ff"/>
<rect x="370" y="111" width="3" height="1" fill="#0000ff"/>
<rect x="377" y="78" width="1" height="33" fill="#ff0000"/>
<rect x="376" y="89" width="3" height="11" fill="#ff0000"/>
<rect x="383" y="78" width="1" height="11" fill="#0000ff"/>
<rect x="382" y="89" width="3" height="1" fill="#0000ff"/>
<rect x="389" y="89" width="1" height="22" fill="#0000ff"/>
<rect x="388" y="89" width="3" height="11" fill="#0000ff"/>
<rect x="395" y="100" width="1" height="11" fill="#0000ff"/>
<rect x="394" y="100" width="3" height="1" fill="#0000ff"/>
<rect x="401" y="89" width="1" height="22" fill="#0000ff"/>
<rect x="400" y="100" width="3" height="1" fill="#0000ff"/>
<rect x="407" y="67" width="1" height="33" fill="#ff0000"/>
<rect x="406" y="89" width="3" height="11" fill="#ff0000"/>
<rect x="413" y="89" width="1" height="22" fill="#0000ff"/>
<rect x="412" y="89" width="3" height="22" fill="#0000ff"/>
<rect x="419" y="100" width="1" height="22" fill="#0000ff"/>
<rect x="418" y="111" width="3" height="11" fill="#0000ff"/>
<rect x="425" y="100" width="1" height="22" fill="#ff0000"/>
<rect x="424" y="111" width="3" height="1" fill="#ff0000"/>
<rect x="431" y="100" width="1" height="22" fill="#0000ff"/>
<rect x="430" y="111" width="3" height="1" fill="#0000ff"/>
<rect x="437" y="100" width="1" height="22" fill="#0000ff"/>
<rect x="436" y="111" width="3" height="1" fill="#0000ff"/>
<rect x="443" y="100" width="1" height="22" fill="#0000ff"/>
<rect x="442" y="111" width="3" height="1" fill="#0000ff"/>
<rect x="449" y="111" width="1" height="21" fill="#0000ff"/>
<rect x="448" y="122" width="3" height="1" fill="#0000ff"/>
<rect x="455" y="122" width="1" height="32" fill="#0000ff"/>
<rect x="454" y="122" width="3" height="32" fill="#0000ff"/>
<rect x="461" y="111" width="1" height="43" fill="#ff0000"/>
<rect x="460" y="122" width="3" height="21" fill="#ff0000"/>
<rect x="467" y="111" width="1" height="21" fill="#ff0000"/>
<rect x="466" y="122" width="3" height="1" fill="#ff0000"/>
<rect x="473" y="96" width="1" height="30" fill="#ff0000"/>
<rect x="472" y="111" width="3" height="11" fill="#ff0000"/>
<rect x="479" y="122" width="1" height="1" fill="#0000ff"/>
<rect x="478" y="122" width="3" height="1" fill="#0000ff"/>
<rect x="485" y="132" width="1" height="11" fill="#0000ff"/>
<rect x="484" y="132" width="3" height="11" fill="#0000ff"/>
<rect x="491" y="132" width="1" height="11" fill="#0000ff"/>
<rect x="490" y="143" width="3" height="1" fill="#0000ff"/>
<rect x="497" y="122" width="1" height="21" fill="#ff0000"/>
<rect x="496" y="132" width="3" height="1" fill="#ff0000"/>
<rect x="503" y="122" width="1" height="21" fill="#0000ff"/>
<rect x="502" y="132" width="3" height="1" fill="#0000ff"/>
<rect x="509" y="111" width="1" height="21" fill="#ff0000"/>
<rect x="508" y="122" width="3" height="10" fill="#ff0000"/>
<rect x="515" y="122" width="1" height="10" fill="#0000ff"/>
<rect x="514" y="122" width="3" height="10" fill="#0000ff"/>
<rect x="521" y="122" width="1" height="21" fill="#0000ff"/>
<rect x="520" y="132" width="3" height="1" fill="#0000ff"/>
<rect x="527" y="122" width="1" height="21" fill="#0000ff"/>
<rect x="526" y="132" width="3" height="1" fill="#0000ff"/>
<rect x="533" y="122" width="1" height="10" fill="#ff0000"/>
<rect x="532" y="132" width="3" height="1" fill="#ff0000"/>
<rect x="539" y="122" width="1" height="10" fill="#ff0000"/>
<rect x="538" y="122" width="3" height="10" fill="#ff0000"/>
<rect x="545" y="122" width="1" height="10" fill="#0000ff"/>
<rect x="544" y="122" width="3" height="1" fill="#0000ff"/>
<rect x="551" y="122" width="1" height="21" fill="#0000ff"/>
<rect x="550" y="132" width="3" height="11" fill="#0000ff"/>
<rect x="557" y="122" width="1" height="21" fill="#ff0000"/>
<rect x="556" y="122" width="3" height="10" fill="#ff0000"/>
<rect x="563" y="132" width="1" height="11" fill="#0000ff"/>
<rect x="562" y="132" width="3" height="1" fill="#0000ff"/>
<rect x="569" y="132" width="1" height="11" fill="#0000ff"/>
<rect x="568" y="143" width="3" height="1" fill="#0000ff"/>
<rect x="575" y="132" width="1" height="11" fill="#0000ff"/>
<rect x="574" y="143" width="3" height="1" fill="#0000ff"/>
<rect x="581" y="143" width="1" height="11" fill="#0000ff"/>
<rect x="580" y="143" width="3" height="1" fill="#0000ff"/>
<rect x="587" y="132" width="1" height="22" fill="#ff0000"/>
<rect x="586" y="143" width="3" height="11" fill="#ff0000"/>
<rect x="593" y="132" width="1" height="11" fill="#ff0000"/>
<rect x="592" y="143" width="3" height="1" fill="#ff0000"/>
<rect x="599" y="143" width="1" height="1" fill="#0000ff"/>
<rect x="598" y="143" width="3" height="1" fill="#0000ff"/>
<rect x="605" y="132" width="1" height="11" fill="#ff0000"/>
<rect x="604" y="132" width="3" height="11" fill="#ff0000"/>
<rect x="611" y="132" width="1" height="11" fill="#0000ff"/>
<rect x="610" y="132" width="3" height="1" fill="#0000ff"/>
<rect x="617" y="122" width="1" height="10" fill="#0000ff"/>
<rect x="616" y="122" width="3" height="1" fill="#0000ff"/>
<rect x="623" y="122" width="1" height="1" fill="#ff0000"/>
<rect x="622" y="122" width="3" height="1" fill="#ff0000"/>
<rect x="629" y="122" width="1" height="10" fill="#0000ff"/>
<rect x="628" y="122" width="3" height="1" fill="#0000ff"/>
<rect x="635" y="122" width="1" height="10" fill="#ff0000"/>
<rect x="634" y="122" width="3" height="1" fill="#ff0000"/>
<rect x="641" y="111" width="1" height="11" fill="#0000ff"/>
<rect x="640" y="122" width="3" height="1" fill="#0000ff"/>
<rect x="647" y="122" width="1" height="1" fill="#0000ff"/>
<rect x="646" y="122" width="3" height="1" fill="#0000ff"/>
<rect x="653" y="111" width="1" height="17" fill="#0000ff"/>
<rect x="652" y="111" width="3" height="1" fill="#0000ff"/>
<rect x="659" y="111" width="1" height="11" fill="#0000ff"/>
<rect x="658" y="111" width="3" height="11" fill="#0000ff"/>
<rect x="665" y="100" width="1" height="43" fill="#ff0000"/>
<rect x="664" y="100" width="3" height="32" fill="#ff0000"/>
<rect x="671" y="100" width="1" height="22" fill="#0000ff"/>
<rect x="670" y="100" width="3" height="11" fill="#0000ff"/>
<rect x="677" y="100" width="1" height="22" fill="#0000ff"/>
<rect x="676" y="111" width="3" height="11" fill="#0000ff"/>
<rect x="683" y="100" width="1" height="11" fill="#ff0000"/>
<rect x="682" y="111" width="3" height="1" fill="#ff0000"/>
<rect x="689" y="89" width="1" height="22" fill="#ff0000"/>
<rect x="688" y="100" width="3" height="11" fill="#ff0000"/>
<rect x="695" y="89" width="1" height="11" fill="#ff0000"/>
<rect x="694" y="89" width="3" height="11" fill="#ff0000"/>
<rect x="701" y="67" width="1" height="31" fill="#ff0000"/>
<rect x="700" y="67" width="3" height="22" fill="#ff0000"/>
<rect x="707" y="78" width="1" height="11" fill="#0000ff"/>
<rect x="706" y="78" width="3" height="11" fill="#0000ff"/>
<rect x="713" y="78" width="1" height="11" fill="#ff0000"/>
<rect x="712" y="78" width="3" height="11" fill="#ff0000"/>
<rect x="719" y="78" width="1" height="11" fill="#ff0000"/>
<rect x="718" y="78" width="3" height="11" fill="#ff0000"/>
<rect x="725" y="78" width="1" height="33" fill="#0000ff"/>
<rect x="724" y="78" width="3" height="33" fill="#0000ff"/>
<rect x="731" y="100" width="1" height="32" fill="#0000ff"/>
<rect x="730" y="111" width="3" height="1" fill="#0000ff"/>
<rect x="737" y="111" width="1" height="21" fill="#0000ff"/>
<rect x="736" y="111" width="3" height="11" fill="#0000ff"/>
<rect x="743" y="122" width="1" height="10" fill="#0000ff"/>
<rect x="742" y="122" width="3" height="10" fill="#0000ff"/>
<rect x="749" y="111" width="1" height="21" fill="#ff0000"/>
<rect x="748" y="122" width="3" height="10" fill="#ff0000"/>
<rect x="755" y="111" width="1" height="21" fill="#0000ff"/>
<rect x="754" y="122" width="3" height="1" fill="#0000ff"/>
<rect x="761" y="111" width="1" height="24" fill="#0000ff"/>
<rect x="760" y="122" width="3" height="1" fill="#0000ff"/>
<rect x="767" y="111" width="1" height="21" fill="#0000ff"/>
<rect x="766" y="122" width="3" height="1" fill="#0000ff"/>
<rect x="773" y="111" width="1" height="21" fill="#0000ff"/>
<rect x="772" y="122" width="3" height="1" fill="#0000ff"/>
<rect x="779" y="111" width="1" height="24" fill="#0000ff"/>
<rect x="778" y="111" width="3" height="11" fill="#0000ff"/>
<rect x="785" y="100" width="1" height="22" fill="#ff0000"/>
<rect x="784" y="111" width="3" height="11" fill="#ff0000"/>
<rect x="791" y="100" width="1" height="30" fill="#0000ff"/>
<rect x="790" y="111" width="3" height="1" fill="#0000ff"/>
<rect x="797" y="100" width="1" height="30" fill="#0000ff"/>
<rect x="796" y="111" width="3" height="1" fill="#0000ff"/>
<rect x="803" y="111" width="1" height="19" fill="#0000ff"/>
<rect x="802" y="111" width="3" height="11" fill="#0000ff"/>
<rect x="809" y="100" width="1" height="22" fill="#ff0000"/>
<rect x="808" y="111" width="3" height="1" fill="#ff0000"/>
<rect x="815" y="100" width="1" height="22" fill="#ff0000"/>
<rect x="814" y="100" width="3" height="11" fill="#ff0000"/>
<rect x="821" y="100" width="1" height="24" fill="#0000ff"/>
<rect x="820" y="111" width="3" height="1" fill="#0000ff"/>
<rect x="827" y="100" width="1" height="24" fill="#0000ff"/>
<rect x="826" y="111" width="3" height="1" fill="#0000ff"/>
<rect x="833" y="89" width="1" height="35" fill="#0000ff"/>
<rect x="832" y="100" width="3" height="1" fill="#0000ff"/>
<rect x="839" y="89" width="1" height="35" fill="#0000ff"/>
<rect x="838" y="100" width="3" height="1" fill="#0000ff"/>
<rect x="845" y="100" width="1" height="32" fill="#0000ff"/>
<rect x="844" y="100" width="3" height="22" fill="#0000ff"/>
<rect x="851" y="100" width="1" height="22" fill="#0000ff"/>
<rect x="850" y="111" width="3" height="1" fill="#0000ff"/>
<rect x="857" y="100" width="1" height="22" fill="#ff0000"/>
<rect x="856" y="100" width="3" height="11" fill="#ff0000"/>
<rect x="863" y="89" width="1" height="22" fill="#0000ff"/>
<rect x="862" y="100" width="3" height="1" fill="#0000ff"/>
<rect x="869" y="100" width="1" height="11" fill="#0000ff"/>
<rect x="868" y="100" width="3" height="11" fill="#0000ff"/>
<rect x="875" y="100" width="1" height="22" fill="#0000ff"/>
<rect x="874" y="100" width="3" height="11" fill="#0000ff"/>
<rect x="881" y="100" width="1" height="22" fill="#0000ff"/>
<rect x="880" y="111" width="3" height="1" fill="#0000ff"/>
<rect x="887" y="100" width="1" height="11" fill="#ff0000"/>
<rect x="886" y="100" width="3" height="11" fill="#ff0000"/>
<rect x="893" y="100" width="1" height="22" fill="#0000ff"/>
<rect x="892" y="100" width="3" height="11" fill="#0000ff"/>
<rect x="899" y="111" width="1" height="11" fill="#0000ff"/>
<rect x="898" y="111" width="3" height="11" fill="#0000ff"/>
<rect x="905" y="104" width="1" height="18" fill="#ff0000"/>
<rect x="904" y="111" width="3" height="11" fill="#ff0000"/>
<rect x="911" y="100" width="1" height="22" fill="#0000ff"/>
<rect x="910" y="111" width="3" height="1" fill="#0000ff"/>
<rect x="917" y="100" width="1" height="32" fill="#ff0000"/>
<rect x="916" y="111" width="3" height="11" fill="#ff0000"/>
<rect x="923" y="89" width="1" height="22" fill="#ff0000"/>
<rect x="922" y="100" width="3" height="11" fill="#ff0000"/>
<rect x="929" y="100" width="1" height="11" fill="#0000ff"/>
<rect x="928" y="100" width="3" height="1" fill="#0000ff"/>
<rect x="935" y="89" width="1" height="22" fill="#0000ff"/>
<rect x="934" y="100" width="3" height="1" fill="#0000ff"/>
<rect x="941" y="89" width="1" height="11" fill="#ff0000"/>
<rect x="940" y="89" width="3" height="11" fill="#ff0000"/>
<rect x="947" y="89" width="1" height="11" fill="#0000ff"/>
<rect x="946" y="89" width="3" height="1" fill="#0000ff"/>
<rect x="953" y="100" width="1" height="43" fill="#0000ff"/>
<rect x="952" y="100" width="3" height="11" fill="#0000ff"/>
<rect x="959" y="115" width="1" height="28" fill="#0000ff"/>
<rect x="958" y="122" width="3" height="10" fill="#0000ff"/>
<rect x="965" y="132" width="1" height="33" fill="#0000ff"/>
<rect x="964" y="132" width="3" height="11" fill="#0000ff"/>
<rect x="971" y="106" width="1" height="48" fill="#ff0000"/>
<rect x="970" y="122" width="3" height="32" fill="#ff0000"/>
<rect x="977" y="100" width="1" height="22" fill="#ff0000"/>
<rect x="976" y="100" width="3" height="11" fill="#ff0000"/>
<rect x="983" y="100" width="1" height="32" fill="#0000ff"/>
<rect x="982" y="111" width="3" height="11" fill="#0000ff"/>
<rect x="989" y="104" width="1" height="28" fill="#ff0000"/>
<rect x="988" y="122" width="3" height="10" fill="#ff0000"/>
<rect x="995" y="111" width="1" height="32" fill="#0000ff"/>
<rect x="994" y="122" width="3" height="10" fill="#0000ff"/>
<rect x="1001" y="106" width="1" height="37" fill="#ff0000"/>
<rect x="1000" y="122" width="3" height="21" fill="#ff0000"/>
<rect x="1007" y="111" width="1" height="11" fill="#ff0000"/>
<rect x="1006" y="111" width="3" height="11" fill="#ff0000"/>
<rect x="1013" y="100" width="1" height="22" fill="#0000ff"/>
<rect x="1012" y="111" width="3" height="11" fill="#0000ff"/>
<rect x="1019" y="106" width="1" height="16" fill="#ff0000"/>
<rect x="1018" y="111" width="3" height="11" fill="#ff0000"/>
<rect x="1025" y="100" width="1" height="11" fill="#ff0000"/>
<rect x="1024" y="100" width="3" height="11" fill="#ff0000"/>
<rect x="1031" y="100" width="1" height="11" fill="#0000ff"/>
<rect x="1030" y="100" width="3" height="11" fill="#0000ff"/>
<rect x="1037" y="100" width="1" height="22" fill="#0000ff"/>
<rect x="1036" y="111" width="3" height="1" fill="#0000ff"/>
<rect x="1043" y="111" width="1" height="11" fill="#ff0000"/>
<rect x="1042" y="111" width="3" height="11" fill="#ff0000"/>
<rect x="1049" y="111" width="1" height="11" fill="#0000ff"/>
<rect x="1048" y="111" width="3" height="11" fill="#0000ff"/>
<rect x="1055" y="111" width="1" height="11" fill="#ff0000"/>
<rect x="1054" y="122" width="3" height="1" fill="#ff0000"/>
<rect x="1061" y="106" width="1" height="16" fill="#0000ff"/>
<rect x="1060" y="111" width="3" height="1" fill="#0000ff"/>
<rect x="1067" y="100" width="1" height="11" fill="#ff0000"/>
<rect x="1066" y="100" width="3" height="11" fill="#ff0000"/>
<rect x="1073" y="100" width="1" height="11" fill="#0000ff"/>
<rect x="1072" y="100" width="3" height="11" fill="#0000ff"/>
<rect x="1079" y="100" width="1" height="17" fill="#0000ff"/>
<rect x="1078" y="111" width="3" height="1" fill="#0000ff"/>
<rect x="1085" y="106" width="1" height="16" fill="#ff0000"/>
<rect x="1084" y="111" width="3" height="11" fill="#ff0000"/>
<rect x="1091" y="100" width="1" height="11" fill="#0000ff"/>
<rect x="1090" y="111" width="3" height="1" fill="#0000ff"/>
<rect x="1097" y="89" width="1" height="11" fill="#ff0000"/>
<rect x="1096" y="100" width="3" height="1" fill="#ff0000"/>
<rect x="1103" y="89" width="1" height="11" fill="#0000ff"/>
<rect x="1102" y="100" width="3" height="1" fill="#0000ff"/>
<rect x="1109" y="100" width="1" height="1" fill="#0000ff"/>
<rect x="1108" y="100" width="3" height="1" fill="#0000ff"/>
<rect x="1115" y="78" width="1" height="22" fill="#ff0000"/>
<rect x="1114" y="89" width="3" height="11" fill="#ff0000"/>
<rect x="1121" y="78" width="1" height="11" fill="#0000ff"/>
<rect x="1120" y="89" width="3" height="1" fill="#0000ff"/>
<rect x="1127" y="78" width="1" height="11" fill="#ff0000"/>
<rect x="1126" y="78" width="3" height="1" fill="#ff0000"/>
<rect x="1133" y="78" width="1" height="11" fill="#0000ff"/>
<rect x="1132" y="89" width="3" height="1" fill="#0000ff"/>
<rect x="1139" y="78" width="1" height="11" fill="#0000ff"/>
<rect x="1138" y="89" width="3" height="1" fill="#0000ff"/>
<rect x="1145" y="89" width="1" height="1" fill="#0000ff"/>
<rect x="1144" y="89" width="3" height="1" fill="#0000ff"/>
<rect x="1151" y="89" width="1" height="11" fill="#0000ff"/>
<rect x="1150" y="89" width="3" height="11" fill="#0000ff"/>
<rect x="1157" y="89" width="1" height="11" fill="#ff0000"/>
<rect x="1156" y="89" width="3" height="11" fill="#ff0000"/>
<rect x="1163" y="89" width="1" height="22" fill="#0000ff"/>
<rect x="1162" y="89" width="3" height="22" fill="#0000ff"/>
<rect x="1169" y="100" width="1" height="1" fill="#ff0000"/>
<rect x="1168" y="100" width="3" height="1" fill="#ff0000"/>
<rect x="1175" y="100" width="1" height="1" fill="#ff0000"/>
<rect x="1174" y="100" width="3" height="1" fill="#ff0000"/>
<rect x="1181" y="89" width="1" height="11" fill="#0000ff"/>
<rect x="1180" y="100" width="3" height="1" fill="#0000ff"/>
<rect x="1187" y="89" width="1" height="11" fill="#ff0000"/>
<rect x="1186" y="89" width="3" height="11" fill="#ff0000"/>
<rect x="1193" y="89" width="1" height="11" fill="#ff0000"/>
<rect x="1192" y="89" width="3" height="11" fill="#ff0000"/>
<rect x="1199" y="89" width="1" height="11" fill="#0000ff"/>
<rect x="1198" y="89" width="3" height="11" fill="#0000ff"/>
<rect x="1205" y="100" width="1" height="11" fill="#0000ff"/>
<rect x="1204" y="111" width="3" height="1" fill="#0000ff"/>
<rect x="1211" y="100" width="1" height="11" fill="#0000ff"/>
<rect x="1210" y="111" width="3" height="1" fill="#0000ff"/>
<rect x="1217" y="100" width="1" height="22" fill="#0000ff"/>
<rect x="1216" y="122" width="3" height="1" fill="#0000ff"/>
<rect x="1223" y="122" width="1" height="10" fill="#0000ff"/>
<rect x="1222" y="122" width="3" height="1" fill="#0000ff"/>
<rect x="1229" y="122" width="1" height="10" fill="#0000ff"/>
<rect x="1228" y="122" width="3" height="1" fill="#0000ff"/>
<rect x="1235" y="143" width="1" height="1" fill="#0000ff"/>
<rect x="1234" y="143" width="3" height="1" fill="#0000ff"/>
<rect x="1241" y="122" width="1" height="32" fill="#0000ff"/>
<rect x="1240" y="143" width="3" height="1" fill="#0000ff"/>
<rect x="1247" y="143" width="1" height="44" fill="#0000ff"/>
<rect x="1246" y="143" width="3" height="44" fill="#0000ff"/>
<rect x="1253" y="154" width="1" height="33" fill="#ff0000"/>
<rect x="1252" y="154" width="3" height="33" fill="#ff0000"/>
<rect x="1259" y="154" width="1" height="33" fill="#0000ff"/>
<rect x="1258" y="154" width="3" height="33" fill="#0000ff"/>
<rect x="1265" y="176" width="1" height="43" fill="#0000ff"/>
<rect x="1264" y="187" width="3" height="11" fill="#0000ff"/>
<rect x="1271" y="187" width="1" height="21" fill="#0000ff"/>
<rect x="1270" y="187" width="3" height="11" fill="#0000ff"/>
<polygon points="912,111.5 924,111.5 918,119" fill="#ff0000"/>
</g>
<g id="vol" fill="#009000">
<rect x="4" y="313" width="3" height="2"/>
<rect x="10" y="314" width="3" height="1"/>
<rect x="16" y="314" width="3" height="1"/>
<rect x="22" y="313" width="3" height="2"/>
<rect x="28" y="312" width="3" height="3"/>
<rect x="34" y="252" width="3" height="63"/>
<rect x="40" y="269" width="3" height="46"/>
<rect x="46" y="296" width="3" height="19"/>
<rect x="52" y="277" width="3" height="38"/>
<rect x="58" y="297" width="3" height="18"/>
<rect x="64" y="294" width="3" height="21"/>
<rect x="70" y="302" width="3" height="13"/>
<rect x="76" y="309" width="3" height="6"/>
<rect x="82" y="310" width="3" height="5"/>
<rect x="88" y="289" width="3" height="26"/>
<rect x="94" y="303" width="3" height="12"/>
<rect x="100" y="299" width="3" height="16"/>
<rect x="106" y="301" width="3" height="14"/>
<rect x="112" y="285" width="3" height="30"/>
<rect x="118" y="258" width="3" height="57"/>
<rect x="124" y="278" width="3" height="37"/>
<rect x="130" y="291" width="3" height="24"/>
<rect x="136" y="300" width="3" height="15"/>
<rect x="142" y="306" width="3" height="9"/>
<rect x="148" y="310" width="3" height="5"/>
<rect x="154" y="305" width="3" height="10"/>
<rect x="160" y="299" width="3" height="16"/>
<rect x="166" y="306" width="3" height="9"/>
<rect x="172" y="299" width="3" height="16"/>
<rect x="178" y="301" width="3" height="14"/>
<rect x="184" y="306" width="3" height="9"/>
<rect x="190" y="313" width="3" height="2"/>
<rect x="196" y="309" width="3" height="6"/>
<rect x="202" y="309" width="3" height="6"/>
<rect x="208" y="311" width="3" height="4"/>
<rect x="214" y="300" width="3" height="15"/>
<rect x="220" y="314" width="3" height="1"/>
<rect x="226" y="305" width="3" height="10"/>
<rect x="232" y="307" width="3" height="8"/>
<rect x="238" y="312" width="3" height="3"/>
<rect x="244" y="310" width="3" height="5"/>
<rect x="250" y="311" width="3" height="4"/>
<rect x="256" y="314" width="3" height="1"/>
<rect x="262" y="299" width="3" height="16"/>
<rect x="268" y="311" width="3" height="4"/>
<rect x="274" y="314" width="3" height="1"/>
<rect x="280" y="311" width="3" height="4"/>
<rect x="286" y="308" width="3" height="7"/>
<rect x="292" y="306" width="3" height="9"/>
<rect x="298" y="312" width="3" height="3"/>
<rect x="304" y="314" width="3" height="1"/>
<rect x="310" y="310" width="3" height="5"/>
<rect x="316" y="298" width="3" height="17"/>
<rect x="322" y="310" width="3" height="5"/>
<rect x="328" y="309" width="3" height="6"/>
<rect x="334" y="311" width="3" height="4"/>
<rect x="340" y="310" width="3" height="5"/>
<rect x="346" y="298" width="3" height="17"/>
<rect x="352" y="295" width="3" height="20"/>
<rect x="358" y="304" width="3" height="11"/>
<rect x="364" y="310" width="3" height="5"/>
<rect x="370" y="304" width="3" height="11"/>
<rect x="376" y="307" width="3" height="8"/>
<rect x="382" y="310" width="3" height="5"/>
<rect x="388" y="313" width="3" height="2"/>
<rect x="394" y="302" width="3" height="13"/>
<rect x="400" y="312" width="3" height="3"/>
<rect x="406" y="290" width="3" height="25"/>
<rect x="412" y="300" width="3" height="15"/>
<rect x="418" y="303" width="3" height="12"/>
<rect x="424" y="310" width="3" height="5"/>
<rect x="430" y="311" width="3" height="4"/>
<rect x="436" y="294" width="3" height="21"/>
<rect x="442" y="309" width="3" height="6"/>
<rect x="448" y="306" width="3" height="9"/>
<rect x="454" y="301" width="3" height="14"/>
<rect x="460" y="298" width="3" height="17"/>
<rect x="466" y="299" width="3" height="16"/>
<rect x="472" y="298" width="3" height="17"/>
<rect x="478" y="300" width="3" height="15"/>
<rect x="484" y="304" width="3" height="11"/>
<rect x="490" y="313" width="3" height="2"/>
<rect x="496" y="314" width="3" height="1"/>
<rect x="502" y="312" width="3" height="3"/>
<rect x="508" y="309" width="3" height="6"/>
<rect x="514" y="313" width="3" height="2"/>
<rect x="520" y="312" width="3" height="3"/>
<rect x="526" y="313" width="3" height="2"/>
<rect x="532" y="313" width="3" height="2"/>
<rect x="538" y="314" width="3" height="1"/>
<rect x="550" y="309" width="3" height="6"/>
<rect x="556" y="313" width="3" height="2"/>
<rect x="562" y="313" width="3" height="2"/>
<rect x="568" y="314" width="3" height="1"/>
<rect x="574" y="312" width="3" height="3"/>
<rect x="580" y="314" width="3" height="1"/>
<rect x="586" y="312" width="3" height="3"/>
<rect x="604" y="314" width="3" height="1"/>
<rect x="610" y="311" width="3" height="4"/>
<rect x="628" y="312" width="3" height="3"/>
<rect x="634" y="313" width="3" height="2"/>
<rect x="640" y="313" width="3" height="2"/>
<rect x="646" y="314" width="3" height="1"/>
<rect x="652" y="312" width="3" height="3"/>
<rect x="658" y="312" width="3" height="3"/>
<rect x="664" y="309" width="3" height="6"/>
<rect x="670" y="312" width="3" height="3"/>
<rect x="676" y="314" width="3" height="1"/>
<rect x="682" y="313" width="3" height="2"/>
<rect x="688" y="309" width="3" height="6"/>
<rect x="694" y="314" width="3" height="1"/>
<rect x="700" y="307" width="3" height="8"/>
<rect x="706" y="314" width="3" height="1"/>
<rect x="712" y="314" width="3" height="1"/>
<rect x="718" y="310" width="3" height="5"/>
<rect x="724" y="308" width="3" height="7"/>
<rect x="730" y="312" width="3" height="3"/>
<rect x="736" y="311" width="3" height="4"/>
<rect x="742" y="314" width="3" height="1"/>
<rect x="748" y="314" width="3" height="1"/>
<rect x="754" y="314" width="3" height="1"/>
<rect x="760" y="313" width="3" height="2"/>
<rect x="766" y="314" width="3" height="1"/>
<rect x="772" y="313" width="3" height="2"/>
<rect x="778" y="313" width="3" height="2"/>
<rect x="784" y="313" width="3" height="2"/>
<rect x="796" y="313" width="3" height="2"/>
<rect x="802" y="313" width="3" height="2"/>
<rect x="826" y="314" width="3" height="1"/>
<rect x="832" y="312" width="3" height="3"/>
<rect x="838" y="312" width="3" height="3"/>
<rect x="844" y="311" width="3" height="4"/>
<rect x="850" y="314" width="3" height="1"/>
<rect x="856" y="311" width="3" height="4"/>
<rect x="862" y="312" width="3" height="3"/>
<rect x="868" y="314" width="3" height="1"/>
<rect x="874" y="312" width="3" height="3"/>
<rect x="880" y="313" width="3" height="2"/>
<rect x="886" y="314" width="3" height="1"/>
<rect x="892" y="312" width="3" height="3"/>
<rect x="898" y="314" width="3" height="1"/>
<rect x="910" y="313" width="3" height="2"/>
<rect x="916" y="307" width="3" height="8"/>
<rect x="922" y="309" width="3" height="6"/>
<rect x="928" y="311" width="3" height="4"/>
<rect x="934" y="312" width="3" height="3"/>
<rect x="940" y="312" width="3" height="3"/>
<rect x="946" y="313" width="3" height="2"/>
<rect x="952" y="300" width="3" height="15"/>
<rect x="958" y="307" width="3" height="8"/>
<rect x="964" y="305" width="3" height="10"/>
<rect x="970" y="305" width="3" height="10"/>
<rect x="976" y="307" width="3" height="8"/>
<rect x="982" y="310" width="3" height="5"/>
<rect x="988" y="312" width="3" height="3"/>
<rect x="994" y="312" width="3" height="3"/>
<rect x="1000" y="312" width="3" height="3"/>
<rect x="1006" y="312" width="3" height="3"/>
<rect x="1012" y="314" width="3" height="1"/>
<rect x="1018" y="313" width="3" height="2"/>
<rect x="1024" y="314" width="3" height="1"/>
<rect x="1030" y="314" width="3" height="1"/>
<rect x="1036" y="312" width="3" height="3"/>
<rect x="1042" y="314" width="3" height="1"/>
<rect x="1060" y="312" width="3" height="3"/>
<rect x="1066" y="314" width="3" height="1"/>
<rect x="1072" y="313" width="3" height="2"/>
<rect x="1078" y="314" width="3" height="1"/>
<rect x="1084" y="314" width="3" height="1"/>
<rect x="1090" y="314" width="3" height="1"/>
<rect x="1096" y="313" width="3" height="2"/>
<rect x="1102" y="313" width="3" height="2"/>
<rect x="1108" y="313" width="3" height="2"/>
<rect x="1114" y="312" width="3" height="3"/>
<rect x="1126" y="314" width="3" height="1"/>
<rect x="1132" y="314" width="3" height="1"/>
<rect x="1138" y="311" width="3" height="4"/>
<rect x="1144" y="314" width="3" height="1"/>
<rect x="1156" y="314" width="3" height="1"/>
<rect x="1162" y="314" width="3" height="1"/>
<rect x="1168" y="314" width="3" height="1"/>
<rect x="1198" y="314" width="3" height="1"/>
<rect x="1210" y="314" width="3" height="1"/>
<rect x="1216" y="313" width="3" height="2"/>
<rect x="1222" y="314" width="3" height="1"/>
<rect x="1228" y="314" width="3" height="1"/>
<rect x="1234" y="311" width="3" height="4"/>
<rect x="1240" y="264" width="3" height="51"/>
<rect x="1246" y="278" width="3" height="37"/>
<rect x="1252" y="298" width="3" height="17"/>
<rect x="1258" y="293" width="3" height="22"/>
<rect x="1264" y="274" width="3" height="41"/>
<rect x="1270" y="309" width="3" height="6"/>
<rect x="1276" y="303" width="2" height="12"/>
</g>
<rect x="0" y="315" width="1278" height="1" fill="#000"/>
<rect x="0" y="382" width="1278" height="1" fill="#808080"/>
<g id="macdh" fill="#ff0000">
<rect x="5" y="383" width="1" height="2"/>
<rect x="11" y="383" width="1" height="3"/>
<rect x="17" y="383" width="1" height="3"/>
<rect x="23" y="383" width="1" height="3"/>
<rect x="29" y="383" width="1" height="5"/>
<rect x="35" y="381" width="1" height="1"/>
<rect x="41" y="376" width="1" height="6"/>
<rect x="47" y="372" width="1" height="10"/>
<rect x="53" y="372" width="1" height="10"/>
<rect x="59" y="373" width="1" height="9"/>
<rect x="65" y="374" width="1" height="8"/>
<rect x="71" y="376" width="1" height="6"/>
<rect x="77" y="376" width="1" height="6"/>
<rect x="83" y="375" width="1" height="7"/>
<rect x="89" y="376" width="1" height="6"/>
<rect x="95" y="380" width="1" height="2"/>
<rect x="101" y="381" width="1" height="1"/>
<rect x="107" y="381" width="1" height="1"/>
<rect x="113" y="383" width="1" height="3"/>
<rect x="119" y="383" width="1" height="9"/>
<rect x="125" y="383" width="1" height="12"/>
<rect x="131" y="383" width="1" height="13"/>
<rect x="137" y="383" width="1" height="14"/>
<rect x="143" y="383" width="1" height="14"/>
<rect x="149" y="383" width="1" height="13"/>
<rect x="155" y="383" width="1" height="11"/>
<rect x="161" y="383" width="1" height="8"/>
<rect x="167" y="383" width="1" height="7"/>
<rect x="173" y="383" width="1" height="6"/>
<rect x="179" y="383" width="1" height="5"/>
<rect x="185" y="383" width="1" height="5"/>
<rect x="191" y="383" width="1" height="4"/>
<rect x="197" y="383" width="1" height="4"/>
<rect x="203" y="383" width="1" height="2"/>
<rect x="209" y="383" width="1" height="1"/>
<rect x="221" y="380" width="1" height="2"/>
<rect x="227" y="378" width="1" height="4"/>
<rect x="233" y="376" width="1" height="6"/>
<rect x="239" y="374" width="1" height="8"/>
<rect x="245" y="374" width="1" height="8"/>
<rect x="251" y="374" width="1" height="8"/>
<rect x="257" y="376" width="1" height="6"/>
<rect x="263" y="376" width="1" height="6"/>
<rect x="269" y="377" width="1" height="5"/>
<rect x="275" y="378" width="1" height="4"/>
<rect x="281" y="378" width="1" height="4"/>
<rect x="287" y="380" width="1" height="2"/>
<rect x="293" y="381" width="1" height="1"/>
<rect x="311" y="381" width="1" height="1"/>
<rect x="323" y="381" width="1" height="1"/>
<rect x="347" y="383" width="1" height="3"/>
<rect x="353" y="383" width="1" height="5"/>
<rect x="359" y="383" width="1" height="6"/>
<rect x="365" y="383" width="1" height="6"/>
<rect x="371" y="383" width="1" height="5"/>
<rect x="377" y="383" width="1" height="2"/>
<rect x="383" y="383" width="1" height="1"/>
<rect x="389" y="383" width="1" height="1"/>
<rect x="407" y="383" width="1" height="2"/>
<rect x="413" y="383" width="1" height="1"/>
<rect x="419" y="383" width="1" height="2"/>
<rect x="425" y="383" width="1" height="2"/>
<rect x="431" y="383" width="1" height="2"/>
<rect x="437" y="383" width="1" height="2"/>
<rect x="443" y="383" width="1" height="2"/>
<rect x="449" y="383" width="1" height="2"/>
<rect x="455" y="383" width="1" height="4"/>
<rect x="461" y="383" width="1" height="4"/>
<rect x="467" y="383" width="1" height="3"/>
<rect x="473" y="383" width="1" height="1"/>
<rect x="479" y="383" width="1" height="1"/>
<rect x="485" y="383" width="1" height="2"/>
<rect x="491" y="383" width="1" height="2"/>
<rect x="497" y="383" width="1" height="2"/>
<rect x="503" y="383" width="1" height="2"/>
<rect x="509" y="383" width="1" height="1"/>
<rect x="515" y="383" width="1" height="1"/>
<rect x="521" y="383" width="1" height="1"/>
<rect x="539" y="381" width="1" height="1"/>
<rect x="545" y="380" width="1" height="2"/>
<rect x="557" y="381" width="1" height="1"/>
<rect x="563" y="381" width="1" height="1"/>
<rect x="581" y="383" width="1" height="1"/>
<rect x="587" y="383" width="1" height="1"/>
<rect x="605" y="381" width="1" height="1"/>
<rect x="611" y="380" width="1" height="2"/>
<rect x="617" y="380" width="1" height="2"/>
<rect x="623" y="380" width="1" height="2"/>
<rect x="629" y="380" width="1" height="2"/>
<rect x="635" y="379" width="1" height="3"/>
<rect x="641" y="379" width="1" height="3"/>
<rect x="647" y="379" width="1" height="3"/>
<rect x="653" y="379" width="1" height="3"/>
<rect x="659" y="379" width="1" height="3"/>
<rect x="665" y="378" width="1" height="4"/>
<rect x="671" y="378" width="1" height="4"/>
<rect x="677" y="379" width="1" height="3"/>
<rect x="683" y="378" width="1" height="4"/>
<rect x="689" y="378" width="1" height="4"/>
<rect x="695" y="377" width="1" height="5"/>
<rect x="701" y="376" width="1" height="6"/>
<rect x="707" y="376" width="1" height="6"/>
<rect x="713" y="376" width="1" height="6"/>
<rect x="719" y="376" width="1" height="6"/>
<rect x="725" y="379" width="1" height="3"/>
<rect x="737" y="383" width="1" height="3"/>
<rect x="743" y="383" width="1" height="4"/>
<rect x="749" y="383" width="1" height="6"/>
<rect x="755" y="383" width="1" height="6"/>
<rect x="761" y="383" width="1" height="5"/>
<rect x="767" y="383" width="1" height="5"/>
<rect x="773" y="383" width="1" height="4"/>
<rect x="779" y="383" width="1" height="4"/>
<rect x="785" y="383" width="1" height="2"/>
<rect x="791" y="383" width="1" height="1"/>
<rect x="797" y="383" width="1" height="1"/>
<rect x="803" y="383" width="1" height="1"/>
<rect x="809" y="383" width="1" height="1"/>
<rect x="821" y="381" width="1" height="1"/>
<rect x="827" y="380" width="1" height="2"/>
<rect x="833" y="380" width="1" height="2"/>
<rect x="839" y="380" width="1" height="2"/>
<rect x="845" y="381" width="1" height="1"/>
<rect x="863" y="381" width="1" height="1"/>
<rect x="893" y="383" width="1" height="1"/>
<rect x="899" y="383" width="1" height="2"/>
<rect x="905" y="383" width="1" height="1"/>
<rect x="911" y="383" width="1" height="1"/>
<rect x="917" y="383" width="1" height="1"/>
<rect x="929" y="381" width="1" height="1"/>
<rect x="935" y="381" width="1" height="1"/>
<rect x="941" y="380" width="1" height="2"/>
<rect x="947" y="380" width="1" height="2"/>
<rect x="953" y="381" width="1" height="1"/>
<rect x="959" y="383" width="1" height="1"/>
<rect x="965" y="383" width="1" height="4"/>
<rect x="971" y="383" width="1" height="4"/>
<rect x="977" y="383" width="1" height="1"/>
<rect x="983" y="383" width="1" height="2"/>
<rect x="989" y="383" width="1" height="2"/>
<rect x="995" y="383" width="1" height="3"/>
<rect x="1001" y="383" width="1" height="2"/>
<rect x="1007" y="383" width="1" height="1"/>
<rect x="1013" y="383" width="1" height="1"/>
<rect x="1025" y="381" width="1" height="1"/>
<rect x="1055" y="381" width="1" height="1"/>
<rect x="1061" y="381" width="1" height="1"/>
<rect x="1067" y="380" width="1" height="2"/>
<rect x="1073" y="380" width="1" height="2"/>
<rect x="1079" y="381" width="1" height="1"/>
<rect x="1085" y="381" width="1" height="1"/>
<rect x="1091" y="381" width="1" height="1"/>
<rect x="1097" y="381" width="1" height="1"/>
<rect x="1103" y="381" width="1" height="1"/>
<rect x="1109" y="380" width="1" height="2"/>
<rect x="1115" y="380" width="1" height="2"/>
<rect x="1121" y="380" width="1" height="2"/>
<rect x="1127" y="379" width="1" height="3"/>
<rect x="1133" y="380" width="1" height="2"/>
<rect x="1139" y="380" width="1" height="2"/>
<rect x="1145" y="380" width="1" height="2"/>
<rect x="1163" y="383" width="1" height="1"/>
<rect x="1169" y="383" width="1" height="2"/>
<rect x="1175" y="383" width="1" height="2"/>
<rect x="1181" y="383" width="1" height="2"/>
<rect x="1187" y="383" width="1" height="1"/>
<rect x="1193" y="383" width="1" height="1"/>
<rect x="1199" y="383" width="1" height="1"/>
<rect x="1205" y="383" width="1" height="2"/>
<rect x="1211" y="383" width="1" height="3"/>
<rect x="1217" y="383" width="1" height="4"/>
<rect x="1223" y="383" width="1" height="4"/>
<rect x="1229" y="383" width="1" height="5"/>
<rect x="1235" y="383" width="1" height="6"/>
<rect x="1241" y="383" width="1" height="6"/>
<rect x="1247" y="383" width="1" height="8"/>
<rect x="1253" y="383" width="1" height="10"/>
<rect x="1259" y="383" width="1" height="10"/>
<rect x="1265" y="383" width="1" height="11"/>
<rect x="1271" y="383" width="1" height="12"/>
<rect x="1277" y="383" width="1" height="12"/>
</g>
<polyline points="0.0,371.7 11.5,373.5 23.0,376.7 29.0,379.2 35.5,369.7 41.5,363.5 47.5,357.2 53.5,354.5 59.5,354.0 65.5,355.0 71.5,352.2 77.5,350.5 83.5,348.7 89.5,348.5 95.5,351.0 101.5,353.0 107.5,356.0 113.5,361.0 119.5,370.5 125.5,376.0 131.5,379.2 137.5,383.0 143.5,387.2 149.5,390.2 155.5,390.5 161.5,390.5 167.5,391.5 173.5,392.5 179.5,393.5 185.5,394.0 191.5,393.5 197.5,394.0 203.5,393.0 209.5,392.2 215.5,389.0 221.5,386.7 227.5,384.7 233.5,381.5 239.5,378.5 245.5,376.0 251.5,374.0 257.5,373.0 263.5,372.5 269.5,371.0 275.5,370.5 281.5,371.5 287.5,372.2 293.5,373.5 299.5,374.0 305.5,374.0 311.5,373.5 317.5,374.7 323.5,375.2 329.5,374.5 341.5,374.5 347.5,378.0 353.5,381.5 359.5,384.0 365.5,385.0 371.5,385.0 377.5,383.5 383.5,382.5 395.5,382.2 401.5,382.5 413.5,383.0 419.5,385.0 431.5,386.0 443.5,387.0 449.5,388.5 455.5,390.5 461.5,391.5 467.5,390.5 473.5,389.5 479.5,390.0 485.5,392.0 491.5,393.0 503.5,393.0 515.5,392.5 521.5,392.2 527.5,391.5 533.5,391.0 539.5,390.0 545.5,388.0 551.5,389.5 557.5,388.7 563.5,388.5 569.5,389.5 575.5,390.5 581.5,391.0 587.5,391.5 593.5,390.5 599.5,390.0 605.5,389.0 611.5,387.7 617.5,386.7 623.5,386.0 629.5,385.0 635.5,384.0 641.5,383.0 647.5,382.0 653.5,381.5 659.5,380.5 665.5,378.5 671.5,377.5 677.5,377.5 684.0,376.7 689.5,374.7 695.5,372.7 701.5,370.5 707.5,369.0 713.5,367.2 719.5,366.0 725.5,368.5 731.5,371.5 737.5,374.7 743.5,377.5 749.5,379.5 755.5,381.0 761.5,382.0 767.5,383.0 773.5,383.5 779.5,384.0 785.5,383.5 791.5,382.5 797.5,382.0 803.5,383.0 809.5,383.0 815.5,381.0 821.5,380.0 827.5,379.2 833.5,378.2 839.5,378.5 845.5,379.5 851.5,380.5 857.5,380.0 863.5,379.5 869.5,380.2 890.0,380.5 899.5,382.0 905.5,382.5 920.0,382.0 929.5,380.0 935.5,379.2 941.5,378.0 947.5,377.2 953.5,378.0 959.5,381.5 965.5,385.0 971.5,386.0 977.5,384.0 983.5,385.0 989.5,385.5 995.5,387.0 1001.5,387.0 1007.5,386.0 1013.5,386.0 1019.5,384.5 1025.5,383.5 1037.5,384.0 1049.5,383.0 1061.5,382.0 1067.5,381.0 1091.5,381.0 1097.5,380.0 1109.5,378.5 1115.5,377.0 1121.5,375.5 1127.5,374.0 1139.5,374.0 1145.5,374.5 1151.5,375.5 1157.5,376.0 1163.5,377.5 1169.5,378.5 1181.5,379.0 1187.5,378.0 1199.5,378.0 1205.5,379.5 1211.5,381.5 1217.5,383.5 1223.5,385.0 1229.5,387.0 1235.5,390.0 1241.5,392.5 1247.5,397.5 1253.5,400.5 1259.5,404.0 1265.5,407.5 1271.5,410.5 1277.0,412.5" fill="none" stroke="#ffff00" stroke-width="1" />
<polyline points="0.0,369.7 11.5,371.5 23.0,373.5 29.0,374.2 35.5,374.0 41.5,371.7 47.5,369.0 53.5,366.7 59.5,364.2 65.5,362.2 71.5,360.5 77.5,359.0 83.5,357.0 89.5,355.2 95.5,354.2 101.5,354.2 107.5,354.5 113.5,355.5 119.5,357.7 125.5,361.5 131.5,365.0 137.5,368.5 143.5,372.2 149.5,375.5 155.5,378.5 161.5,381.0 167.5,383.0 173.5,385.0 179.5,386.5 185.5,388.0 191.5,389.5 197.5,390.5 203.5,391.0 209.5,391.2 215.5,390.7 221.5,389.7 227.5,388.7 233.5,387.2 239.5,385.5 245.5,383.5 251.5,381.5 257.5,380.0 263.5,378.7 269.5,377.5 275.5,376.5 281.5,375.5 287.5,374.5 293.5,374.2 341.5,374.2 347.5,375.2 353.5,376.7 359.5,378.0 365.5,379.2 371.5,380.2 377.5,381.2 390.0,381.5 400.0,382.2 407.5,381.2 413.5,382.2 425.5,383.2 437.5,384.2 443.5,385.0 449.5,386.0 455.5,387.0 461.5,387.7 473.5,388.2 479.5,389.0 485.5,390.0 491.5,390.5 497.5,391.0 503.5,391.5 521.5,391.5 533.5,391.0 545.5,390.2 557.5,389.7 569.5,389.7 575.5,390.2 593.5,390.2 605.5,389.7 617.5,388.7 629.5,387.5 641.5,386.0 653.5,384.5 665.5,383.0 671.5,381.5 677.5,380.7 684.0,380.5 689.5,379.2 695.5,377.7 701.5,376.2 707.5,375.0 713.5,373.5 719.5,372.2 725.5,371.2 731.5,371.2 737.5,372.0 743.5,373.0 749.5,374.0 755.5,375.2 761.5,376.7 767.5,378.0 773.5,379.2 779.5,380.2 785.5,381.2 800.0,381.2 803.5,382.2 809.5,382.2 815.5,381.2 827.5,381.0 833.5,380.2 900.0,380.2 905.5,381.2 930.0,381.2 935.5,380.5 941.5,380.0 947.5,379.2 953.5,379.2 959.5,380.5 965.5,381.5 971.5,382.5 983.5,383.0 995.5,384.0 1001.5,385.0 1025.5,384.5 1049.5,383.5 1073.5,382.5 1091.5,382.0 1097.5,381.0 1109.5,380.0 1121.5,378.0 1133.5,376.5 1145.5,376.0 1157.5,375.5 1163.5,376.5 1175.5,377.0 1199.5,377.0 1205.5,378.0 1217.5,379.5 1223.5,380.5 1229.5,382.0 1235.5,384.5 1241.5,386.5 1247.5,389.0 1253.5,391.0 1259.5,394.0 1265.5,396.5 1271.5,399.0 1277.0,401.0" fill="none" stroke="#0000ff" stroke-width="1" />
<rect x="0" y="458" width="1278" height="1" fill="#0000ff"/>
<rect x="0" y="498" width="1278" height="1" fill="#ff0000"/>
<g clip-path="url(#cps)">
<polyline points="0.0,469.7 5.5,482.2 11.5,493.0 17.5,495.5 23.5,492.2 29.5,494.0 35.5,488.0 41.5,478.5 47.5,464.8 53.5,459.8 59.5,459.0 65.5,462.2 71.5,464.8 77.5,463.0 83.5,459.8 89.5,456.5 95.5,456.5 101.5,459.0 107.5,463.0 113.5,469.0 119.5,478.5 125.5,489.8 131.5,494.0 137.5,493.5 143.5,493.0 149.5,494.5 155.5,494.0 161.5,491.5 167.5,491.0 173.5,490.5 179.5,490.0 185.5,490.0 191.5,488.0 197.5,486.8 203.5,482.0 209.5,479.2 215.5,473.5 221.5,469.0 227.5,463.5 233.5,458.5 239.5,453.0 245.5,450.5 251.5,449.0 257.5,450.2 263.5,450.5 269.5,451.0 275.5,449.8 281.5,449.2 287.5,452.2 293.5,456.5 299.5,464.0 305.5,467.5 311.5,467.2 317.5,467.2 323.5,474.8 329.5,482.2 335.5,482.0 341.5,478.5 347.5,486.0 353.5,494.0 359.5,497.2 365.5,492.2 371.5,487.2 377.5,480.5 383.5,474.8 389.5,471.0 395.5,471.0 401.5,472.0 407.5,471.0 413.5,472.0 419.5,476.0 425.5,481.0 431.5,483.5 437.5,484.8 443.5,488.0 449.5,491.5 455.5,496.0 461.5,496.0 467.5,494.0 473.5,489.0 479.5,486.5 485.5,488.0 491.5,492.2 497.5,494.0 503.5,492.2 509.5,486.0 515.5,483.0 521.5,482.0 527.5,483.0 533.5,484.0 539.5,482.0 545.5,479.8 551.5,483.5 557.5,484.0 563.5,486.5 569.5,488.5 575.5,496.5 581.5,501.0 587.5,501.0 593.5,493.0 599.5,488.5 605.5,481.5 611.5,478.5 617.5,472.2 623.5,466.0 629.5,463.0 635.5,457.2 641.5,457.2 647.5,457.2 653.5,459.0 659.5,459.8 665.5,458.0 671.5,457.2 677.5,459.8 683.5,463.5 689.5,464.8 695.5,459.0 701.5,454.0 707.5,453.0 713.5,453.0 719.5,455.5 725.5,459.8 731.5,467.2 737.5,477.2 743.5,484.8 749.5,491.5 755.5,496.5 761.5,498.5 767.5,499.5 773.5,499.8 779.5,500.2 785.5,497.8 791.5,493.5 797.5,489.0 803.5,489.0 809.5,486.0 815.5,478.0 821.5,465.5 827.5,455.5 833.5,452.0 839.5,454.0 845.5,463.0 851.5,473.0 857.5,479.0 863.5,475.5 869.5,471.5 875.5,471.5 881.5,474.0 887.5,474.0 893.5,473.0 899.5,476.0 905.5,479.8 911.5,482.2 917.5,479.8 923.5,476.5 929.5,472.2 935.5,467.2 941.5,461.5 947.5,455.5 953.5,454.0 959.5,463.5 965.5,475.5 971.5,481.0 977.5,477.2 983.5,472.2 989.5,469.8 995.5,473.0 1001.5,474.8 1007.5,473.5 1013.5,471.5 1019.5,468.5 1025.5,466.0 1031.5,461.5 1037.5,458.5 1043.5,457.2 1049.5,459.0 1055.5,461.0 1061.5,463.0 1067.5,459.8 1073.5,457.5 1079.5,457.2 1085.5,461.5 1091.5,467.2 1097.5,471.0 1103.5,471.0 1109.5,469.0 1115.5,467.2 1121.5,465.5 1127.5,461.0 1133.5,458.0 1139.5,457.2 1145.5,459.0 1151.5,463.0 1157.5,465.5 1163.5,471.0 1169.5,477.2 1175.5,484.0 1181.5,487.2 1187.5,484.0 1193.5,479.8 1199.5,477.2 1205.5,484.0 1211.5,494.0 1217.5,503.5 1223.5,504.0 1229.5,501.5 1235.5,501.5 1241.5,502.2 1247.5,505.5 1253.5,503.5 1259.5,503.5 1265.5,503.0 1271.5,502.2 1277.5,500.5" fill="none" stroke="#ff0000" stroke-width="1" />
<polyline points="0.0,489.7 5.5,499.8 11.5,494.0 17.5,492.2 23.5,491.0 29.5,501.0 35.5,473.5 41.5,464.0 47.5,457.2 53.5,459.8 59.5,461.5 65.5,466.0 71.5,463.5 77.5,459.8 83.5,454.2 89.5,455.5 95.5,459.8 101.5,462.5 107.5,464.8 113.5,479.0 119.5,492.2 125.5,497.2 131.5,492.2 137.5,492.2 143.5,494.8 149.5,496.5 155.5,493.0 161.5,490.5 167.5,491.5 173.5,490.0 179.5,489.0 185.5,491.0 191.5,484.0 197.5,485.5 203.5,476.0 209.5,477.0 215.5,467.2 221.5,463.5 227.5,459.8 233.5,452.2 239.5,448.0 245.5,450.5 251.5,448.0 257.5,451.0 263.5,453.0 269.5,449.8 275.5,447.2 281.5,451.0 287.5,459.0 293.5,458.0 299.5,474.2 305.5,471.0 311.5,457.2 317.5,473.5 323.5,492.2 329.5,480.5 335.5,472.8 341.5,482.2 347.5,496.0 353.5,499.0 359.5,495.5 365.5,484.2 371.5,484.2 377.5,473.5 383.5,469.0 389.5,471.5 395.5,471.5 401.5,473.0 407.5,468.0 413.5,474.8 419.5,484.8 425.5,483.0 431.5,483.5 437.5,487.2 443.5,492.2 449.5,496.0 455.5,500.2 461.5,493.0 467.5,490.5 473.5,484.0 479.5,486.0 485.5,494.0 491.5,497.2 497.5,491.5 503.5,488.0 509.5,479.8 515.5,482.2 521.5,482.2 527.5,484.0 533.5,484.0 539.5,478.0 545.5,478.0 551.5,494.8 557.5,481.0 563.5,485.5 569.5,498.5 575.5,505.5 581.5,499.8 587.5,497.2 593.5,482.2 599.5,486.5 605.5,476.0 611.5,472.2 617.5,469.0 623.5,457.2 629.5,462.2 635.5,453.0 641.5,458.0 647.5,458.5 653.5,460.5 659.5,461.0 665.5,453.0 671.5,457.2 677.5,467.2 683.5,464.0 689.5,461.0 695.5,453.0 701.5,449.0 707.5,456.5 713.5,455.0 719.5,456.0 725.5,469.8 731.5,476.0 737.5,484.0 743.5,493.0 749.5,497.2 755.5,499.0 761.5,499.0 767.5,500.2 773.5,500.2 779.5,500.2 785.5,492.2 791.5,489.0 797.5,487.2 803.5,492.2 809.5,479.8 815.5,462.2 821.5,453.0 827.5,449.0 833.5,454.8 839.5,458.0 845.5,475.5 851.5,486.0 857.5,474.0 863.5,467.2 869.5,473.0 875.5,474.8 881.5,477.2 887.5,469.0 893.5,473.5 899.5,484.8 905.5,481.0 911.5,479.8 917.5,479.0 923.5,470.5 929.5,466.5 935.5,463.5 941.5,454.0 947.5,449.0 953.5,461.0 959.5,479.0 965.5,486.5 971.5,479.8 977.5,467.2 983.5,470.5 989.5,472.2 995.5,477.2 1001.5,474.8 1007.5,469.0 1013.5,471.5 1019.5,466.0 1025.5,461.0 1031.5,458.0 1037.5,457.5 1043.5,456.0 1049.5,464.0 1055.5,463.0 1061.5,462.2 1067.5,453.0 1073.5,457.2 1079.5,458.0 1085.5,468.5 1091.5,473.0 1097.5,469.8 1103.5,468.5 1109.5,468.0 1115.5,464.8 1121.5,463.0 1127.5,454.0 1133.5,457.2 1139.5,459.0 1145.5,460.5 1151.5,469.0 1157.5,465.5 1163.5,479.8 1169.5,484.8 1175.5,487.2 1181.5,488.0 1187.5,477.2 1193.5,472.2 1199.5,481.0 1205.5,497.2 1211.5,504.0 1217.5,508.0 1223.5,501.0 1229.5,498.5 1235.5,505.5 1241.5,503.0 1247.5,507.2 1253.5,498.5 1259.5,505.5 1265.5,503.0 1271.5,501.0 1277.5,498.0" fill="none" stroke="#0000ff" stroke-width="1" />
</g>
<rect x="1278" y="6" width="1" height="549" fill="#000"/>
<rect x="0" y="524" width="1331" height="1" fill="#000"/>
<rect x="11" y="524" width="1" height="5" fill="#000"/>
<rect x="59" y="524" width="1" height="5" fill="#000"/>
<rect x="155" y="524" width="1" height="5" fill="#000"/>
<rect x="251" y="524" width="1" height="5" fill="#000"/>
<rect x="347" y="524" width="1" height="5" fill="#000"/>
<rect x="443" y="524" width="1" height="5" fill="#000"/>
<rect x="545" y="524" width="1" height="5" fill="#000"/>
<rect x="641" y="524" width="1" height="5" fill="#000"/>
<rect x="737" y="524" width="1" height="5" fill="#000"/>
<rect x="833" y="524" width="1" height="5" fill="#000"/>
<rect x="929" y="524" width="1" height="5" fill="#000"/>
<rect x="1025" y="524" width="1" height="5" fill="#000"/>
<rect x="1121" y="524" width="1" height="5" fill="#000"/>
<rect x="1217" y="524" width="1" height="5" fill="#000"/>
<rect x="1265" y="524" width="1" height="5" fill="#000"/>
<rect x="1278" y="24" width="6" height="1" fill="#000"/>
<rect x="1278" y="67" width="6" height="1" fill="#000"/>
<rect x="1278" y="111" width="6" height="1" fill="#000"/>
<rect x="1278" y="154" width="6" height="1" fill="#000"/>
<rect x="1278" y="198" width="6" height="1" fill="#000"/>
<rect x="1278" y="251" width="6" height="1" fill="#000"/>
<rect x="1278" y="288" width="6" height="1" fill="#000"/>
<rect x="1278" y="348" width="6" height="1" fill="#000"/>
<rect x="1278" y="385" width="6" height="1" fill="#000"/>
<rect x="1278" y="445" width="6" height="1" fill="#000"/>
<rect x="1278" y="485" width="6" height="1" fill="#000"/>
<rect x="1282" y="314" width="39" height="13" fill="#000"/>
<rect x="1283" y="315" width="37" height="11" fill="#fff"/>
<rect x="1326" y="8" width="5" height="13" fill="#fff"/>
<rect x="1326" y="8" width="5" height="1" fill="#808080"/>
<rect x="1326" y="8" width="1" height="13" fill="#808080"/>
<rect x="1326" y="20" width="5" height="1" fill="#808080"/>
<polygon points="1328,12 1331,12 1331,15" fill="#000"/>
<rect x="1326" y="236" width="5" height="13" fill="#fff"/>
<rect x="1326" y="236" width="5" height="1" fill="#808080"/>
<rect x="1326" y="236" width="1" height="13" fill="#808080"/>
<rect x="1326" y="248" width="5" height="1" fill="#808080"/>
<polygon points="1328,240 1331,240 1331,243" fill="#000"/>
<rect x="1326" y="332" width="5" height="13" fill="#fff"/>
<rect x="1326" y="332" width="5" height="1" fill="#808080"/>
<rect x="1326" y="332" width="1" height="13" fill="#808080"/>
<rect x="1326" y="344" width="5" height="1" fill="#808080"/>
<polygon points="1328,336 1331,336 1331,339" fill="#000"/>
<rect x="1326" y="430" width="5" height="13" fill="#fff"/>
<rect x="1326" y="430" width="5" height="1" fill="#808080"/>
<rect x="1326" y="430" width="1" height="13" fill="#808080"/>
<rect x="1326" y="442" width="5" height="1" fill="#808080"/>
<polygon points="1328,434 1331,434 1331,437" fill="#000"/>
</svg>
<svg width="1366" height="768" viewBox="0 0 1366 768" style="position:absolute;left:0;top:0;will-change:transform">
<g id="txt" font-family="'Liberation Mono','IPAGothic',monospace" fill="#000" stroke="#000" stroke-width="0.25" opacity="0.999" shape-rendering="auto" text-rendering="geometricPrecision">
<text x="2.3" y="19" textLength="24" lengthAdjust="spacingAndGlyphs" font-size="12" font-family="'Liberation Sans','IPAGothic',sans-serif">日経</text>
<text transform="scale(0.806,1)" x="59.55 67.00 74.44 81.89" y="19" font-size="12.4" text-anchor="middle" font-family="'Liberation Mono',monospace">mini</text>
<text transform="scale(0.86,1)" x="34.88 41.86 48.84 90.70 97.67 104.65 111.63 118.60 125.58 139.53" y="19" font-size="12.4" text-anchor="middle" font-family="'Liberation Sans',sans-serif">22512/09(5</text>
<text x="122.3" y="19" textLength="12" lengthAdjust="spacingAndGlyphs" font-size="12" font-family="'Liberation Sans','IPAGothic',sans-serif">分</text>
<text transform="scale(0.86,1)" x="160.47 174.42 181.40 188.37 195.35 202.33 209.30 216.28 223.26 230.23 237.21 251.16 265.12 272.09 279.07 286.05 293.02 300.00 306.98 313.95 320.93 327.91 341.86" y="19" font-size="12.4" text-anchor="middle" font-family="'Liberation Sans',sans-serif">,2012/07/18-2012/07/20)</text>
<text x="315.3" y="19" textLength="48" lengthAdjust="spacingAndGlyphs" font-size="12" font-family="'Liberation Sans','IPAGothic',sans-serif">移動平均</text>
<text transform="scale(0.806,1)" x="470.22 477.67 485.11 492.56 500.00" y="19" font-size="12.4" text-anchor="middle" font-family="'Liberation Mono',monospace">Close</text>
<text transform="scale(0.86,1)" x="426.74 475.58 489.53 496.51 510.47" y="19" font-size="12.4" text-anchor="middle" font-family="'Liberation Sans',sans-serif">(,10)</text>
<text x="462.3" y="19" textLength="48" lengthAdjust="spacingAndGlyphs" font-size="12" font-family="'Liberation Sans','IPAGothic',sans-serif">移動平均</text>
<text transform="scale(0.806,1)" x="652.61 660.05 667.49 674.94 682.38" y="19" font-size="12.4" text-anchor="middle" font-family="'Liberation Mono',monospace">Close</text>
<text transform="scale(0.86,1)" x="597.67 646.51 660.47 674.42" y="19" font-size="12.4" text-anchor="middle" font-family="'Liberation Sans',sans-serif">(,5)</text>
<text x="602.3" y="19" textLength="60" lengthAdjust="spacingAndGlyphs" font-size="12" font-family="'Liberation Sans','IPAGothic',sans-serif">一目均衡表</text>
<text transform="scale(0.86,1)" x="774.42 788.37 795.35 809.30 816.28 823.26 837.21 844.19 858.14" y="19" font-size="12.4" text-anchor="middle" font-family="'Liberation Sans',sans-serif">(9,26,52)</text>
<text x="760.3" y="19" textLength="48" lengthAdjust="spacingAndGlyphs" font-size="12" font-family="'Liberation Sans','IPAGothic',sans-serif">移動平均</text>
<text transform="scale(0.806,1)" x="1022.33 1029.78 1037.22 1044.67 1052.11" y="19" font-size="12.4" text-anchor="middle" font-family="'Liberation Mono',monospace">Close</text>
<text transform="scale(0.86,1)" x="944.19 993.02 1006.98 1013.95 1027.91" y="19" font-size="12.4" text-anchor="middle" font-family="'Liberation Sans',sans-serif">(,20)</text>
<text x="906.3" y="19" textLength="48" lengthAdjust="spacingAndGlyphs" font-size="12" font-family="'Liberation Sans','IPAGothic',sans-serif">移動平均</text>
<text transform="scale(0.806,1)" x="1203.47 1210.92 1218.36 1225.81 1233.25" y="19" font-size="12.4" text-anchor="middle" font-family="'Liberation Mono',monospace">Close</text>
<text transform="scale(0.86,1)" x="1113.95 1162.79 1176.74 1183.72 1197.67" y="19" font-size="12.4" text-anchor="middle" font-family="'Liberation Sans',sans-serif">(,25)</text>
<text x="1052.3" y="19" textLength="48" lengthAdjust="spacingAndGlyphs" font-size="12" font-family="'Liberation Sans','IPAGothic',sans-serif">移動平均</text>
<text transform="scale(0.806,1)" x="1384.62 1392.06 1399.50 1406.95 1414.39" y="19" font-size="12.4" text-anchor="middle" font-family="'Liberation Mono',monospace">Close</text>
<text transform="scale(0.86,1)" x="1283.72 1332.56 1346.51 1353.49 1367.44" y="19" font-size="12.4" text-anchor="middle" font-family="'Liberation Sans',sans-serif">(,75)</text>
<text x="2.3" y="32.8" textLength="48" lengthAdjust="spacingAndGlyphs" font-size="12" font-family="'Liberation Sans','IPAGothic',sans-serif">移動平均</text>
<text transform="scale(0.806,1)" x="81.89 89.33 96.77 104.22 111.66" y="32.8" font-size="12.4" text-anchor="middle" font-family="'Liberation Mono',monospace">Close</text>
<text transform="scale(0.86,1)" x="62.79 111.63 125.58 132.56 146.51" y="32.8" font-size="12.4" text-anchor="middle" font-family="'Liberation Sans',sans-serif">(,75)</text>
<text x="148.3" y="32.8" textLength="48" lengthAdjust="spacingAndGlyphs" font-size="12" font-family="'Liberation Sans','IPAGothic',sans-serif">移動平均</text>
<text transform="scale(0.806,1)" x="263.03 270.47 277.92 285.36 292.80" y="32.8" font-size="12.4" text-anchor="middle" font-family="'Liberation Mono',monospace">Close</text>
<text transform="scale(0.86,1)" x="232.56 281.40 295.35 302.33 309.30 323.26" y="32.8" font-size="12.4" text-anchor="middle" font-family="'Liberation Sans',sans-serif">(,150)</text>
<text x="300.3" y="32.8" textLength="48" lengthAdjust="spacingAndGlyphs" font-size="12" font-family="'Liberation Sans','IPAGothic',sans-serif">移動平均</text>
<text transform="scale(0.806,1)" x="451.61 459.06 466.50 473.95 481.39" y="32.8" font-size="12.4" text-anchor="middle" font-family="'Liberation Mono',monospace">Close</text>
<text transform="scale(0.86,1)" x="409.30 458.14 472.09 479.07 493.02" y="32.8" font-size="12.4" text-anchor="middle" font-family="'Liberation Sans',sans-serif">(,40)</text>
<text x="2.3" y="245.6" textLength="36" lengthAdjust="spacingAndGlyphs" font-size="12" font-family="'Liberation Sans','IPAGothic',sans-serif">出来高</text>
<text transform="scale(0.806,1)" x="7.44 14.89 22.33 29.78" y="342.7" font-size="12.4" text-anchor="middle" font-family="'Liberation Mono',monospace">MACD</text>
<text transform="scale(0.86,1)" x="34.88 48.84 55.81 62.79 76.74 83.72 90.70 104.65 118.60" y="342.7" font-size="12.4" text-anchor="middle" font-family="'Liberation Sans',sans-serif">(12,26,9)</text>
<text x="2.3" y="440" textLength="156" lengthAdjust="spacingAndGlyphs" font-size="12" font-family="'Liberation Sans','IPAGothic',sans-serif">スロー・ストキャスティクス</text>
<text transform="scale(0.86,1)" x="188.37 202.33 209.30 216.28 230.23 237.21 251.16 258.14 265.12 279.07 286.05 300.00" y="440" font-size="12.4" text-anchor="middle" font-family="'Liberation Sans',sans-serif">(14,3,80,20)</text>
<text transform="scale(0.86,1)" x="1500.00 1506.98 1513.95 1520.93 1527.91" y="30" font-size="12.4" text-anchor="middle" font-family="'Liberation Sans',sans-serif">8,835</text>
<text transform="scale(0.86,1)" x="1500.00 1506.98 1513.95 1520.93 1527.91" y="73" font-size="12.4" text-anchor="middle" font-family="'Liberation Sans',sans-serif">8,815</text>
<text transform="scale(0.86,1)" x="1500.00 1506.98 1513.95 1520.93 1527.91" y="117" font-size="12.4" text-anchor="middle" font-family="'Liberation Sans',sans-serif">8,795</text>
<text transform="scale(0.86,1)" x="1500.00 1506.98 1513.95 1520.93 1527.91" y="160" font-size="12.4" text-anchor="middle" font-family="'Liberation Sans',sans-serif">8,775</text>
<text transform="scale(0.86,1)" x="1500.00 1506.98 1513.95 1520.93 1527.91" y="204" font-size="12.4" text-anchor="middle" font-family="'Liberation Sans',sans-serif">8,755</text>
<text transform="scale(0.86,1)" x="1500.00 1506.98 1513.95 1520.93 1527.91 1534.88" y="257" font-size="12.4" text-anchor="middle" font-family="'Liberation Sans',sans-serif">180.00</text>
<text transform="scale(0.86,1)" x="1500.00 1506.98 1513.95 1520.93 1527.91" y="294" font-size="12.4" text-anchor="middle" font-family="'Liberation Sans',sans-serif">75.00</text>
<text transform="scale(0.86,1)" x="1500.00 1506.98 1513.95 1520.93 1527.91" y="354" font-size="12.4" text-anchor="middle" font-family="'Liberation Sans',sans-serif">12.50</text>
<text transform="scale(0.86,1)" x="1500.00 1506.98 1513.95 1520.93 1527.91" y="391" font-size="12.4" text-anchor="middle" font-family="'Liberation Sans',sans-serif">-1.00</text>
<text transform="scale(0.86,1)" x="1500.00 1506.98 1513.95 1520.93 1527.91 1534.88" y="451" font-size="12.4" text-anchor="middle" font-family="'Liberation Sans',sans-serif">100.00</text>
<text transform="scale(0.86,1)" x="1500.00 1506.98 1513.95 1520.93 1527.91" y="491" font-size="12.4" text-anchor="middle" font-family="'Liberation Sans',sans-serif">40.00</text>
<text transform="scale(0.86,1)" x="16.28 23.26 30.23 37.21 44.19" y="544.5" font-size="12.4" text-anchor="middle" font-family="'Liberation Sans',sans-serif">02:40</text>
<text transform="scale(0.86,1)" x="72.09 79.07 86.05 93.02 100.00" y="544.5" font-size="12.4" text-anchor="middle" font-family="'Liberation Sans',sans-serif">09:20</text>
<text transform="scale(0.86,1)" x="183.72 190.70 197.67 204.65 211.63" y="544.5" font-size="12.4" text-anchor="middle" font-family="'Liberation Sans',sans-serif">10:40</text>
<text transform="scale(0.86,1)" x="295.35 302.33 309.30 316.28 323.26" y="544.5" font-size="12.4" text-anchor="middle" font-family="'Liberation Sans',sans-serif">12:00</text>
<text transform="scale(0.86,1)" x="406.98 413.95 420.93 427.91 434.88" y="544.5" font-size="12.4" text-anchor="middle" font-family="'Liberation Sans',sans-serif">13:20</text>
<text transform="scale(0.86,1)" x="518.60 525.58 532.56 539.53 546.51" y="544.5" font-size="12.4" text-anchor="middle" font-family="'Liberation Sans',sans-serif">14:40</text>
<text transform="scale(0.86,1)" x="637.21 644.19 651.16 658.14 665.12" y="544.5" font-size="12.4" text-anchor="middle" font-family="'Liberation Sans',sans-serif">17:20</text>
<text transform="scale(0.86,1)" x="748.84 755.81 762.79 769.77 776.74" y="544.5" font-size="12.4" text-anchor="middle" font-family="'Liberation Sans',sans-serif">18:40</text>
<text transform="scale(0.86,1)" x="860.47 867.44 874.42 881.40 888.37" y="544.5" font-size="12.4" text-anchor="middle" font-family="'Liberation Sans',sans-serif">20:00</text>
<text transform="scale(0.86,1)" x="972.09 979.07 986.05 993.02 1000.00" y="544.5" font-size="12.4" text-anchor="middle" font-family="'Liberation Sans',sans-serif">21:20</text>
<text transform="scale(0.86,1)" x="1083.72 1090.70 1097.67 1104.65 1111.63" y="544.5" font-size="12.4" text-anchor="middle" font-family="'Liberation Sans',sans-serif">22:40</text>
<text transform="scale(0.86,1)" x="1195.35 1202.33 1209.30 1216.28 1223.26" y="544.5" font-size="12.4" text-anchor="middle" font-family="'Liberation Sans',sans-serif">07/20</text>
<text transform="scale(0.86,1)" x="1306.98 1313.95 1320.93 1327.91 1334.88" y="544.5" font-size="12.4" text-anchor="middle" font-family="'Liberation Sans',sans-serif">01:20</text>
<text transform="scale(0.86,1)" x="1418.60 1425.58 1432.56 1439.53 1446.51" y="544.5" font-size="12.4" text-anchor="middle" font-family="'Liberation Sans',sans-serif">02:40</text>
<text transform="scale(0.86,1)" x="1474.42 1481.40" y="544.5" font-size="12.4" text-anchor="middle" font-family="'Liberation Sans',sans-serif">09</text>
</g>
<g font-family="'Liberation Mono','IPAGothic',monospace" fill="#000" opacity="0.999" shape-rendering="auto">
<text x="1285" y="324.5" font-size="14">×</text>
<text transform="scale(0.86,1)" x="1517.44 1524.42 1531.40" y="324.5" font-size="12.4" text-anchor="middle" font-family="'Liberation Sans',sans-serif">100</text>
</g>
</svg></body></html>
